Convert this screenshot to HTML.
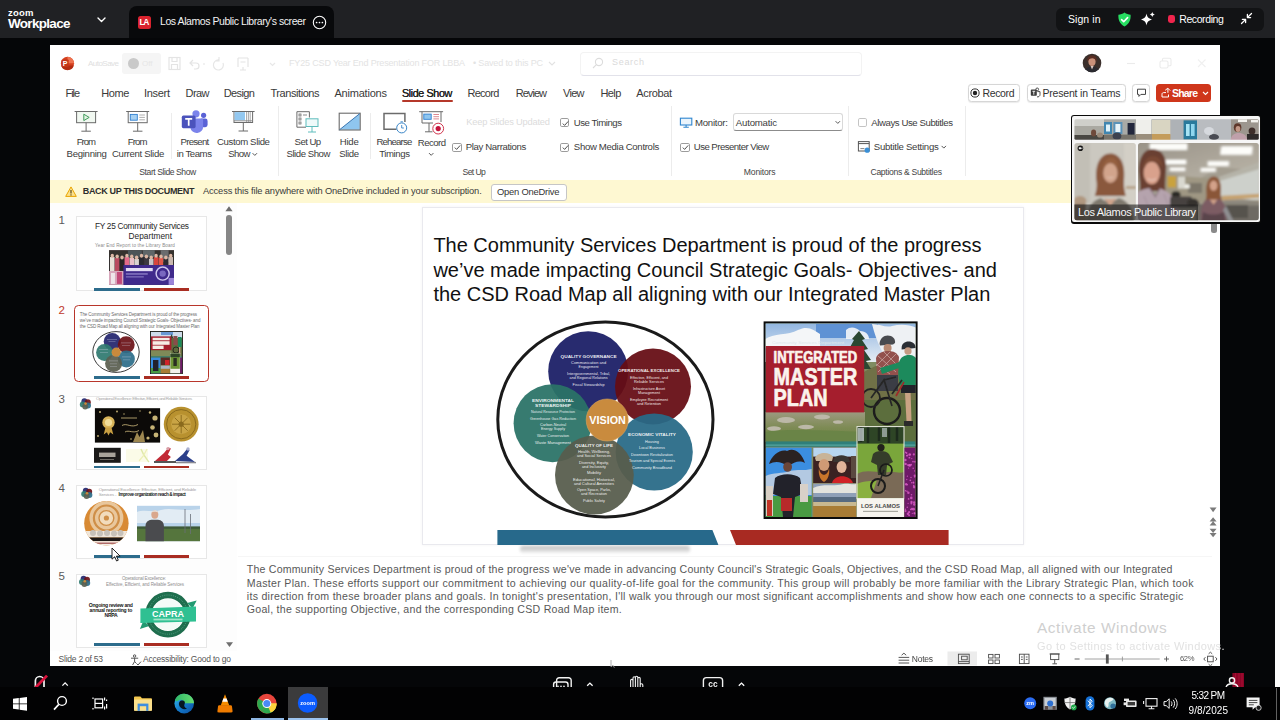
<!DOCTYPE html>
<html>
<head>
<meta charset="utf-8">
<title>Zoom screen share</title>
<style>
*{box-sizing:border-box;margin:0;padding:0}
html,body{width:1280px;height:720px;overflow:hidden;background:#050608;font-family:"Liberation Sans",sans-serif;}
.abs{position:absolute}
#root{position:relative;width:1280px;height:720px;overflow:hidden;background:#050608}
#soft{position:absolute;left:0;top:0;width:1280px;height:720px;filter:blur(0.45px)}
svg text{font-family:"Liberation Sans",sans-serif}
.t{position:absolute;white-space:nowrap}
</style>
</head>
<body>
<div id="root"><div id="soft">
<!-- p_zoom.zoombar -->
<div class="abs" style="left:0px;top:0px;width:1275px;height:38px;background:#202124;"></div>
<span class="t" style="left:8.00px;top:7.75px;font-size:9.5px;line-height:9.5px;color:#fff;letter-spacing:0.232px;font-weight:bold;">zoom</span>
<span class="t" style="left:8.00px;top:17.25px;font-size:13.5px;line-height:13.5px;color:#fff;letter-spacing:-0.691px;font-weight:bold;">Workplace</span>
<svg class="abs" style="left:97px;top:17px;" width="9" height="6" viewBox="0 0 9 6"><path d="M1 1 L4.5 4.5 L8 1" fill="none" stroke="#fff" stroke-width="1.4" stroke-linecap="round" stroke-linejoin="round"/></svg>
<div class="abs" style="left:129px;top:6px;width:204.5px;height:32px;background:#08090b;border-radius:8px 8px 0 0;"></div>
<div class="abs" style="left:138px;top:15.5px;width:13px;height:13px;background:#d9232e;border-radius:2.5px;"></div>
<span class="t" style="left:139.60px;top:17.95px;font-size:8.5px;line-height:8.5px;color:#fff;letter-spacing:-1.531px;font-weight:bold;">LA</span>
<span class="t" style="left:160.00px;top:16.25px;font-size:10.5px;line-height:10.5px;color:#f2f2f2;letter-spacing:-0.429px;">Los Alamos Public Library's screer</span>
<svg class="abs" style="left:312px;top:14.5px;" width="15" height="15" viewBox="0 0 15 15"><circle cx="7.5" cy="7.5" r="6.2" fill="none" stroke="#fff" stroke-width="1.1"/><circle cx="4.6" cy="7.5" r="0.85" fill="#fff"/><circle cx="7.5" cy="7.5" r="0.85" fill="#fff"/><circle cx="10.4" cy="7.5" r="0.85" fill="#fff"/></svg>
<div class="abs" style="left:1056px;top:8px;width:208px;height:22.5px;background:#121315;border-radius:6px;"></div>
<span class="t" style="left:1068.00px;top:14.05px;font-size:10.5px;line-height:10.5px;color:#fff;letter-spacing:0.066px;">Sign in</span>
<svg class="abs" style="left:1116.5px;top:11.5px;" width="15" height="15" viewBox="0 0 15 15"><path d="M7.5 0.6 C9.3 2 11.5 2.6 13.6 2.7 C13.9 7.8 12.3 11.9 7.5 14.4 C2.7 11.9 1.1 7.8 1.4 2.7 C3.5 2.6 5.7 2 7.5 0.6Z" fill="#27de62"/><path d="M4.6 7.6 L6.7 9.7 L10.6 5.6" fill="none" stroke="#ffffff" stroke-width="1.6" stroke-linecap="round" stroke-linejoin="round"/></svg>
<svg class="abs" style="left:1139.5px;top:11px;" width="16" height="16" viewBox="0 0 16 16"><path d="M6.5 2.5 C7.2 6.2 8.3 7.3 12 8.5 C8.3 9.7 7.2 10.8 6.5 14.5 C5.8 10.8 4.7 9.7 1 8.5 C4.7 7.3 5.8 6.2 6.5 2.5Z" fill="#fff"/><path d="M12.3 0.8 C12.6 2.5 13.1 3 14.8 3.5 C13.1 4 12.6 4.5 12.3 6.2 C12 4.5 11.5 4 9.8 3.5 C11.5 3 12 2.5 12.3 0.8Z" fill="#fff"/></svg>
<div class="abs" style="left:1168.2px;top:15.4px;width:7.2px;height:7.2px;background:#f0254d;border-radius:2.4px;"></div>
<span class="t" style="left:1179.20px;top:13.95px;font-size:10.5px;line-height:10.5px;color:#fff;letter-spacing:-0.395px;">Recording</span>
<svg class="abs" style="left:1240px;top:12px;" width="13" height="13" viewBox="0 0 13 13"><g fill="none" stroke="#fff" stroke-width="1.3" stroke-linecap="round" stroke-linejoin="round"><path d="M11.5 1.5 L7.6 5.4 M7.4 2.4 V5.6 H10.6"/><path d="M1.5 11.5 L5.4 7.6 M2.4 7.4 H5.6 V10.6"/></g></svg>
<div class="abs" style="left:1275px;top:0px;width:5px;height:687px;background:#fbfbfb;"></div>
<!-- p_chrome.window -->
<div class="abs" style="left:50px;top:45px;width:1170px;height:621px;background:#ffffff;"></div>
<svg class="abs" style="left:60px;top:56px;" width="15" height="15" viewBox="0 0 15 15"><circle cx="7.5" cy="7.3" r="6.6" fill="#d5401f"/><path d="M7.5 0.7 A6.6 6.6 0 0 1 14.1 7.3 L7.5 7.3Z" fill="#ee7350"/><path d="M1.2 9.5 A6.6 6.6 0 0 0 13.8 9.5Z" fill="#b22c12"/><rect x="1.5" y="3.6" width="7.2" height="7.4" rx="1" fill="#c4351a"/><text x="5.1" y="10" font-family="Liberation Sans" font-weight="bold" font-size="7" fill="#fff" text-anchor="middle">P</text></svg>
<span class="t" style="left:88.00px;top:59.50px;font-size:8px;line-height:8px;color:#e0e0e0;letter-spacing:-0.528px;">AutoSave</span>
<div class="abs" style="left:122px;top:53px;width:39px;height:21px;background:#f5f5f5;border-radius:3px;"></div>
<div class="abs" style="left:127.5px;top:58px;width:11px;height:11px;background:#c9c9c9;border-radius:50%;"></div>
<span class="t" style="left:142.00px;top:59.50px;font-size:8px;line-height:8px;color:#e6e6e6;">Off</span>
<svg class="abs" style="left:167px;top:54px;" width="120" height="20" viewBox="0 0 120 20"><g fill="none" stroke="#e4e4e4" stroke-width="1.2"><rect x="2" y="3.5" width="11" height="12"/><path d="M5 3.5v4h5v-4M4.5 15.5v-5h6v5"/><path d="M26 6 l-3 3 3 3 M23 9 h6 a3 3 0 0 1 0 6 h-2"/><path d="M36 10h2"/><path d="M52 6 a5 5 0 1 0 4 3 M52 3v4h-4" stroke="#e6e6e6"/><path d="M71 4h10M71 4v9M81 4v9M73.5 8h5M76 13v3M73 16h6"/><path d="M103 9l2.5 2.5 2.5 -2.5" stroke="#e8e8e8"/></g></svg>
<span class="t" style="left:289.00px;top:59.00px;font-size:9px;line-height:9px;color:#e3e3e3;letter-spacing:-0.161px;">FY25 CSD Year End Presentation FOR LBBA</span>
<span class="t" style="left:473.00px;top:59.00px;font-size:9px;line-height:9px;color:#e3e3e3;letter-spacing:-0.158px;">• Saved to this PC</span>
<svg class="abs" style="left:548px;top:61px;" width="8" height="6" viewBox="0 0 8 6"><path d="M1 1l3 3 3-3" fill="none" stroke="#e2e2e2" stroke-width="1.1"/></svg>
<div class="abs" style="left:580px;top:51.5px;width:282px;height:24px;background:#fff;border:1px solid #f3f3f3;border-bottom-color:#e2e2ea;border-radius:4px;"></div>
<svg class="abs" style="left:592px;top:57px;" width="12" height="12" viewBox="0 0 12 12"><circle cx="7" cy="5" r="3.6" fill="none" stroke="#dcdcdc" stroke-width="1.1"/><path d="M4.4 7.6L1 11" stroke="#dcdcdc" stroke-width="1.1"/></svg>
<span class="t" style="left:612.00px;top:58.00px;font-size:9px;line-height:9px;color:#dadada;letter-spacing:0.697px;">Search</span>
<svg class="abs" style="left:1082px;top:53px;" width="20" height="20" viewBox="0 0 20 20"><defs><clipPath id="avc"><circle cx="10" cy="10" r="9.3"/></clipPath></defs><g clip-path="url(#avc)"><rect width="20" height="20" fill="#3b302c"/><ellipse cx="10" cy="8.6" rx="3.6" ry="4.4" fill="#c9917a"/><path d="M5.2 9 C4.6 3.5 8 2.2 10 2.4 C12.6 2.2 15.5 4 14.7 9.5 C14 7 13 5.5 10.5 5.2 C8 5.4 6.2 6.5 5.2 9Z" fill="#5a2d22"/><path d="M2 20 C3 14.5 6.5 13.6 10 13.8 C13.5 13.6 17 14.5 18 20Z" fill="#2a2a30"/><path d="M8.6 13 L10 16.5 L11.6 13Z" fill="#d8c7c0"/></g></svg>
<svg class="abs" style="left:1124px;top:55px;" width="90" height="16" viewBox="0 0 90 16"><g fill="none" stroke="#ebebeb" stroke-width="1.1"><path d="M3 8.5h8"/><rect x="36" y="6" width="8" height="7" rx="1.5"/><path d="M38.5 6v-1.8a1 1 0 0 1 1-1h6a1.5 1.5 0 0 1 1.5 1.5v5a1 1 0 0 1-1 1h-2" /><path d="M74 4.5l7.5 7.5M81.5 4.5l-7.5 7.5" stroke="#f0f0f0"/></g></svg>
<span class="t" style="left:65.50px;top:88.10px;font-size:11px;line-height:11px;color:#3a3a3a;letter-spacing:-1.075px;">File</span>
<span class="t" style="left:101.20px;top:88.10px;font-size:11px;line-height:11px;color:#3a3a3a;letter-spacing:-0.348px;">Home</span>
<span class="t" style="left:144.00px;top:88.10px;font-size:11px;line-height:11px;color:#3a3a3a;letter-spacing:-0.302px;">Insert</span>
<span class="t" style="left:185.50px;top:88.10px;font-size:11px;line-height:11px;color:#3a3a3a;letter-spacing:-0.557px;">Draw</span>
<span class="t" style="left:223.70px;top:88.10px;font-size:11px;line-height:11px;color:#3a3a3a;letter-spacing:-0.588px;">Design</span>
<span class="t" style="left:270.50px;top:88.10px;font-size:11px;line-height:11px;color:#3a3a3a;letter-spacing:-0.439px;">Transitions</span>
<span class="t" style="left:334.50px;top:88.10px;font-size:11px;line-height:11px;color:#3a3a3a;letter-spacing:-0.213px;">Animations</span>
<span class="t" style="left:467.50px;top:88.10px;font-size:11px;line-height:11px;color:#3a3a3a;letter-spacing:-0.732px;">Record</span>
<span class="t" style="left:515.70px;top:88.10px;font-size:11px;line-height:11px;color:#3a3a3a;letter-spacing:-0.954px;">Review</span>
<span class="t" style="left:563.00px;top:88.10px;font-size:11px;line-height:11px;color:#3a3a3a;letter-spacing:-0.715px;">View</span>
<span class="t" style="left:600.50px;top:88.10px;font-size:11px;line-height:11px;color:#3a3a3a;letter-spacing:-0.608px;">Help</span>
<span class="t" style="left:636.30px;top:88.10px;font-size:11px;line-height:11px;color:#3a3a3a;letter-spacing:-0.368px;">Acrobat</span>
<span class="t" style="left:401.70px;top:88.10px;font-size:11px;line-height:11px;color:#1f1f1f;letter-spacing:-0.504px;text-shadow:0.35px 0 0 #1f1f1f;">Slide Show</span>
<div class="abs" style="left:401.5px;top:100px;width:51px;height:1.8px;background:#b5382a;border-radius:1px;"></div>
<div class="abs" style="left:967.5px;top:83.8px;width:52.5px;height:18px;background:#fff;border:1px solid #d6d6d6;border-radius:3.5px;box-shadow:0 0.5px 1px rgba(0,0,0,0.08);"></div>
<svg class="abs" style="left:969.5px;top:87.5px;" width="10" height="10" viewBox="0 0 10 10"><circle cx="5" cy="5" r="4.1" fill="none" stroke="#333" stroke-width="1"/><circle cx="5" cy="5" r="2.2" fill="#222"/></svg>
<span class="t" style="left:982.50px;top:87.55px;font-size:10.5px;line-height:10.5px;color:#333;letter-spacing:-0.370px;">Record</span>
<div class="abs" style="left:1026.5px;top:83.8px;width:99px;height:18px;background:#fff;border:1px solid #d6d6d6;border-radius:3.5px;box-shadow:0 0.5px 1px rgba(0,0,0,0.08);"></div>
<svg class="abs" style="left:1029.5px;top:87px;" width="11" height="11" viewBox="0 0 11 11"><rect x="0.8" y="2.6" width="6" height="6.2" rx="0.8" fill="#3d3d3d"/><path d="M2.4 4.3h2.8M3.8 4.3v3.4" stroke="#fff" stroke-width="0.9"/><circle cx="7.2" cy="2.4" r="1.4" fill="none" stroke="#3d3d3d" stroke-width="0.9"/><path d="M7.4 4.6h2.6v3a2.3 2.3 0 0 1-3 2.2" fill="none" stroke="#3d3d3d" stroke-width="0.9"/></svg>
<span class="t" style="left:1042.50px;top:87.55px;font-size:10.5px;line-height:10.5px;color:#333;letter-spacing:-0.195px;">Present in Teams</span>
<div class="abs" style="left:1132px;top:83.8px;width:17.8px;height:18px;background:#fff;border:1px solid #d6d6d6;border-radius:3.5px;box-shadow:0 0.5px 1px rgba(0,0,0,0.08);"></div>
<svg class="abs" style="left:1135.5px;top:88px;" width="11" height="10" viewBox="0 0 11 10"><path d="M1.5 1.2h8v5.2h-4.6l-2 2v-2h-1.4z" fill="none" stroke="#444" stroke-width="1"/></svg>
<div class="abs" style="left:1156.2px;top:84.2px;width:54.6px;height:17.6px;background:#cf361b;border-radius:3.5px;"></div>
<svg class="abs" style="left:1159.5px;top:87px;" width="11" height="11" viewBox="0 0 11 11"><path d="M2 10V7.2C2 6.2 2.7 5.6 3.6 5.6H6" fill="none" stroke="#fff" stroke-width="1"/><path d="M5.2 3.3L7.8 1.2l2.4 2.4M7.9 1.5v4.3" fill="none" stroke="#fff" stroke-width="1" stroke-linejoin="round"/><path d="M2 10h6.5V7.5" fill="none" stroke="#fff" stroke-width="1"/></svg>
<span class="t" style="left:1172.00px;top:87.75px;font-size:10.5px;line-height:10.5px;color:#fff;letter-spacing:-0.796px;font-weight:bold;">Share</span>
<svg class="abs" style="left:1201.5px;top:91px;" width="7" height="5" viewBox="0 0 7 5"><path d="M1 1l2.5 2.5L6 1" fill="none" stroke="#fff" stroke-width="1.1"/></svg>
<!-- p_ribbon.ribbon -->
<div class="abs" style="left:170.7px;top:112.5px;width:1px;height:46.5px;background:#ececec;"></div>
<div class="abs" style="left:278px;top:106px;width:1px;height:70px;background:#ececec;"></div>
<div class="abs" style="left:370px;top:112.5px;width:1px;height:46.5px;background:#ececec;"></div>
<div class="abs" style="left:671.2px;top:106px;width:1px;height:70px;background:#ececec;"></div>
<div class="abs" style="left:848.2px;top:106px;width:1px;height:70px;background:#ececec;"></div>
<div class="abs" style="left:965.2px;top:106px;width:1px;height:70px;background:#ececec;"></div>
<span class="t" style="left:76.70px;top:136.90px;font-size:9.6px;line-height:9.6px;color:#3c3c3c;letter-spacing:-0.999px;">From</span>
<span class="t" style="left:66.60px;top:148.90px;font-size:9.6px;line-height:9.6px;color:#3c3c3c;letter-spacing:-0.301px;">Beginning</span>
<span class="t" style="left:127.70px;top:136.90px;font-size:9.6px;line-height:9.6px;color:#3c3c3c;letter-spacing:-0.833px;">From</span>
<span class="t" style="left:112.00px;top:148.90px;font-size:9.6px;line-height:9.6px;color:#3c3c3c;letter-spacing:-0.311px;">Current Slide</span>
<span class="t" style="left:180.50px;top:136.90px;font-size:9.6px;line-height:9.6px;color:#3c3c3c;letter-spacing:-0.714px;">Present</span>
<span class="t" style="left:176.80px;top:148.90px;font-size:9.6px;line-height:9.6px;color:#3c3c3c;letter-spacing:-0.435px;">in Teams</span>
<span class="t" style="left:217.00px;top:136.90px;font-size:9.6px;line-height:9.6px;color:#3c3c3c;letter-spacing:-0.372px;">Custom Slide</span>
<span class="t" style="left:228.20px;top:148.90px;font-size:9.6px;line-height:9.6px;color:#3c3c3c;letter-spacing:-0.572px;">Show</span>
<span class="t" style="left:294.60px;top:137.10px;font-size:9.6px;line-height:9.6px;color:#3c3c3c;letter-spacing:-0.550px;">Set Up</span>
<span class="t" style="left:286.50px;top:148.80px;font-size:9.6px;line-height:9.6px;color:#3c3c3c;letter-spacing:-0.459px;">Slide Show</span>
<span class="t" style="left:339.70px;top:137.10px;font-size:9.6px;line-height:9.6px;color:#3c3c3c;letter-spacing:-0.215px;">Hide</span>
<span class="t" style="left:339.30px;top:148.80px;font-size:9.6px;line-height:9.6px;color:#3c3c3c;letter-spacing:-0.387px;">Slide</span>
<span class="t" style="left:376.50px;top:137.10px;font-size:9.6px;line-height:9.6px;color:#3c3c3c;letter-spacing:-0.832px;">Rehearse</span>
<span class="t" style="left:379.20px;top:148.80px;font-size:9.6px;line-height:9.6px;color:#3c3c3c;letter-spacing:-0.408px;">Timings</span>
<span class="t" style="left:417.80px;top:137.60px;font-size:9.6px;line-height:9.6px;color:#3c3c3c;letter-spacing:-0.530px;">Record</span>
<span class="t" style="left:139.30px;top:168.30px;font-size:8.6px;line-height:8.6px;color:#444;letter-spacing:-0.439px;">Start Slide Show</span>
<span class="t" style="left:462.50px;top:168.30px;font-size:8.6px;line-height:8.6px;color:#444;letter-spacing:-0.598px;">Set Up</span>
<span class="t" style="left:743.80px;top:168.30px;font-size:8.6px;line-height:8.6px;color:#444;letter-spacing:-0.168px;">Monitors</span>
<span class="t" style="left:870.50px;top:168.30px;font-size:8.6px;line-height:8.6px;color:#444;letter-spacing:-0.313px;">Captions &amp; Subtitles</span>
<span class="t" style="left:466.30px;top:117.85px;font-size:9.3px;line-height:9.3px;color:#dcdcdc;letter-spacing:-0.204px;">Keep Slides Updated</span>
<div class="abs" style="left:452.4px;top:142.6px;width:9.2px;height:9.2px;background:#fff;border:1px solid #9c9c9c;border-radius:1.8px;"><svg width="9" height="9" viewBox="0 0 9 9" style="position:absolute;left:-0.5px;top:-0.5px"><path d="M1.8 4.6L3.6 6.4L7.2 2.4" fill="none" stroke="#444" stroke-width="0.95"/></svg></div>
<span class="t" style="left:465.80px;top:142.30px;font-size:9.6px;line-height:9.6px;color:#3c3c3c;letter-spacing:-0.366px;">Play Narrations</span>
<div class="abs" style="left:560px;top:118.10000000000001px;width:9.2px;height:9.2px;background:#fff;border:1px solid #9c9c9c;border-radius:1.8px;"><svg width="9" height="9" viewBox="0 0 9 9" style="position:absolute;left:-0.5px;top:-0.5px"><path d="M1.8 4.6L3.6 6.4L7.2 2.4" fill="none" stroke="#444" stroke-width="0.95"/></svg></div>
<span class="t" style="left:573.80px;top:117.80px;font-size:9.6px;line-height:9.6px;color:#3c3c3c;letter-spacing:-0.462px;">Use Timings</span>
<div class="abs" style="left:560px;top:142.6px;width:9.2px;height:9.2px;background:#fff;border:1px solid #9c9c9c;border-radius:1.8px;"><svg width="9" height="9" viewBox="0 0 9 9" style="position:absolute;left:-0.5px;top:-0.5px"><path d="M1.8 4.6L3.6 6.4L7.2 2.4" fill="none" stroke="#444" stroke-width="0.95"/></svg></div>
<span class="t" style="left:573.80px;top:142.30px;font-size:9.6px;line-height:9.6px;color:#3c3c3c;letter-spacing:-0.319px;">Show Media Controls</span>
<span class="t" style="left:695.00px;top:117.80px;font-size:9.6px;line-height:9.6px;color:#3c3c3c;letter-spacing:-0.240px;">Monitor:</span>
<div class="abs" style="left:733.2px;top:113.2px;width:109.4px;height:18.2px;background:#fff;border:1px solid #d9d9d9;border-bottom-color:#8c8c8c;border-radius:3px;"></div>
<span class="t" style="left:735.80px;top:117.70px;font-size:9.6px;line-height:9.6px;color:#3c3c3c;letter-spacing:-0.186px;">Automatic</span>
<div class="abs" style="left:680.4px;top:142.6px;width:9.2px;height:9.2px;background:#fff;border:1px solid #9c9c9c;border-radius:1.8px;"><svg width="9" height="9" viewBox="0 0 9 9" style="position:absolute;left:-0.5px;top:-0.5px"><path d="M1.8 4.6L3.6 6.4L7.2 2.4" fill="none" stroke="#444" stroke-width="0.95"/></svg></div>
<span class="t" style="left:693.80px;top:142.30px;font-size:9.6px;line-height:9.6px;color:#3c3c3c;letter-spacing:-0.539px;">Use Presenter View</span>
<div class="abs" style="left:857.6px;top:118.10000000000001px;width:9.2px;height:9.2px;background:#fff;border:1px solid #c4c4c4;border-radius:1.8px;"></div>
<span class="t" style="left:871.30px;top:117.80px;font-size:9.6px;line-height:9.6px;color:#3c3c3c;letter-spacing:-0.418px;">Always Use Subtitles</span>
<span class="t" style="left:873.80px;top:142.30px;font-size:9.6px;line-height:9.6px;color:#3c3c3c;letter-spacing:-0.274px;">Subtitle Settings</span>
<svg class="abs" style="left:0px;top:0px;" width="1280" height="200" viewBox="0 0 1280 200"><g fill="none" stroke="#6b6b6b" stroke-width="1"><path d="M74.6 111.5H97.6"/><rect x="76.6" y="111.5" width="19" height="11.2" fill="#f1f8f1"/><path d="M86.1 122.7V131.2M81.35 131.2H90.85"/></g><path d="M83.8 114.2V120.6L89.2 117.4Z" fill="#e3f3e3" stroke="#3f9b5a" stroke-width="1" stroke-linejoin="round"/><g fill="none" stroke="#6b6b6b" stroke-width="1"><path d="M126.19999999999999 111.5H149.2"/><rect x="128.2" y="111.5" width="19" height="11.2" fill="#fff"/><path d="M137.7 122.7V131.2M132.95 131.2H142.45"/></g><rect x="130.3" y="114.4" width="7" height="5.8" fill="#a6d0f2" stroke="#2f7fd0" stroke-width="0.9"/><path d="M139.3 115h5.6M139.3 117.4h5.6M139.3 119.8h5.6" stroke="#9a9a9a" stroke-width="0.8"/><g><circle cx="203.6" cy="115.3" r="2.6" fill="#5a62d6"/><rect x="199.4" y="118.6" width="8.2" height="8.6" rx="2.4" fill="#5a62d6"/><circle cx="196" cy="113.8" r="3.6" fill="#7b83eb"/><path d="M189.5 118.6h12.4a1.2 1.2 0 0 1 1.2 1.2v6.2a6.4 6.4 0 0 1-12.8 1.2z" fill="#7b83eb"/><rect x="181.8" y="115.6" width="13.8" height="12.6" rx="1.6" fill="#4b53bc"/><path d="M185.2 118.8h7M188.7 118.8v7" stroke="#fff" stroke-width="1.7"/></g><g fill="none" stroke="#6b6b6b" stroke-width="1"><path d="M232.0 111.5H254.6"/><rect x="234.0" y="111.5" width="18.6" height="11" fill="#fff"/><path d="M243.3 122.5V131.0M238.55 131.0H248.05"/></g><rect x="234.6" y="112.1" width="10.4" height="8.2" fill="#93c8f0"/><path d="M246.6 112v10M248.4 112v10M250.2 112v10" stroke="#a8a8a8" stroke-width="1"/><path d="M234 120.8H252.6" stroke="#8a8a8a" stroke-width="0.9"/><g fill="none" stroke="#6b6b6b" stroke-width="1"><path d="M306 127.2H296.9V111.7H309.4V117.5"/><rect x="299" y="114" width="2" height="2" stroke-width="0.8"/><rect x="299" y="118" width="2" height="2" stroke-width="0.8"/><rect x="299" y="122" width="2" height="2" stroke-width="0.8"/><path d="M303 115h4" stroke-width="0.8"/></g><g fill="none" stroke="#5fbdbd" stroke-width="1"><rect x="306" y="118.8" width="12" height="7.7" fill="#eefafa"/><path d="M312 126.5V132M308 132h8"/></g><path d="M339.6 129.7L359.8 113.6V129.7Z" fill="#8fc6ef"/><rect x="339.2" y="113.2" width="21" height="16.8" fill="none" stroke="#6b6b6b" stroke-width="1.1"/><path d="M339.6 129.7L359.8 113.6" stroke="#3b76b0" stroke-width="1"/><path d="M396.5 129.3H384V113.6H404.9V122" fill="none" stroke="#6b6b6b" stroke-width="1.5"/><circle cx="401.7" cy="127.9" r="5" fill="#fff" stroke="#3a86c8" stroke-width="1"/><path d="M401.7 125v3h2.2M400.5 121.8h2.4" fill="none" stroke="#3a86c8" stroke-width="0.9"/><g fill="none" stroke="#6b6b6b" stroke-width="1"><path d="M419.2 111.7H443.1"/><path d="M433 123H422V111.7M441 111.7V122"/><path d="M429 123V131.8M425 131.8H432.5"/></g><rect x="423.8" y="114.1" width="7.4" height="5.2" fill="#8fc6ef" stroke="#2f7fd0" stroke-width="0.9"/><path d="M433.4 114.5h5.6M433.4 116.7h5.6M433.4 118.9h5.6" stroke="#d26a76" stroke-width="0.8"/><circle cx="438.2" cy="128.6" r="5.4" fill="#fff" stroke="#d0344c" stroke-width="1"/><circle cx="438.2" cy="128.6" r="2.6" fill="#c4143c"/><path d="M252.60000000000002 153.20000000000002L254.8 155.4L257.0 153.20000000000002" fill="none" stroke="#444" stroke-width="0.9"/><path d="M429.0 153.1L431.2 155.29999999999998L433.4 153.1" fill="none" stroke="#444" stroke-width="0.9"/><path d="M941.5999999999999 145.9L943.8 148.1L946.0 145.9" fill="none" stroke="#444" stroke-width="0.9"/><path d="M835.5999999999999 121.2L837.8 123.39999999999999L840.0 121.2" fill="none" stroke="#444" stroke-width="0.9"/><g fill="none" stroke="#2f86cf" stroke-width="1.1"><rect x="680.4" y="118.2" width="11.4" height="6.8" fill="#eaf4fc"/><path d="M686.1 125V127M683.4 127.2H688.8"/></g><g><rect x="858.4" y="141.6" width="10.8" height="9.4" fill="#fff" stroke="#555" stroke-width="1"/><path d="M858.4 143.6H869.2" stroke="#555" stroke-width="1"/><path d="M860.4 148.6h4" stroke="#777" stroke-width="0.9"/><circle cx="867.2" cy="150.2" r="2.6" fill="#3a8fd6"/></g></svg>
<div class="abs" style="left:50px;top:179.8px;width:1170px;height:22.8px;background:#fef8d2;"></div>
<svg class="abs" style="left:65px;top:185.6px;" width="12" height="11.5" viewBox="0 0 12 11.5"><path d="M6 0.9L11.3 10.4H0.7Z" fill="#fbe08a" stroke="#e9a400" stroke-width="1" stroke-linejoin="round"/><path d="M6 4v3.4" stroke="#4a3a10" stroke-width="1.1"/><circle cx="6" cy="8.9" r="0.65" fill="#4a3a10"/></svg>
<span class="t" style="left:82.80px;top:187.10px;font-size:9px;line-height:9px;color:#2e2e2e;letter-spacing:-0.337px;font-weight:bold;">BACK UP THIS DOCUMENT</span>
<span class="t" style="left:203.00px;top:186.95px;font-size:9.3px;line-height:9.3px;color:#3a3a3a;letter-spacing:-0.132px;">Access this file anywhere with OneDrive included in your subscription.</span>
<div class="abs" style="left:490.5px;top:183.8px;width:76.5px;height:16.8px;background:#fff;border:1px solid #c6c6c6;border-radius:3px;"></div>
<span class="t" style="left:497.00px;top:187.30px;font-size:9.4px;line-height:9.4px;color:#333;letter-spacing:-0.226px;">Open OneDrive</span>
<!-- p_thumbs.thumbs -->
<div class="abs" style="left:50px;top:202.6px;width:187.4px;height:448px;background:#fdfdfd;"></div>
<span class="t" style="left:58.60px;top:215.45px;font-size:11.5px;line-height:11.5px;color:#5a5a5a;">1</span>
<span class="t" style="left:58.60px;top:304.55px;font-size:11.5px;line-height:11.5px;color:#c0392b;">2</span>
<span class="t" style="left:58.60px;top:393.85px;font-size:11.5px;line-height:11.5px;color:#5a5a5a;">3</span>
<span class="t" style="left:58.60px;top:482.85px;font-size:11.5px;line-height:11.5px;color:#5a5a5a;">4</span>
<span class="t" style="left:58.60px;top:571.45px;font-size:11.5px;line-height:11.5px;color:#5a5a5a;">5</span>
<div class="abs" style="left:76.4px;top:216.4px;width:130.8px;height:74.8px;background:#fff;border:1px solid #e7e7e7;"></div>
<span class="t" style="left:94.90px;top:221.85px;font-size:8.3px;line-height:8.3px;color:#262626;letter-spacing:-0.274px;">FY 25 Community Services</span>
<span class="t" style="left:128.60px;top:231.85px;font-size:8.3px;line-height:8.3px;color:#262626;">Department</span>
<span class="t" style="left:95.00px;top:243.70px;font-size:4.6px;line-height:4.6px;color:#8a8a8a;letter-spacing:0.128px;">Year End Report to the Library Board</span>
<svg class="abs" style="left:108.6px;top:249.6px;" width="65.6" height="35" viewBox="0 0 66 35"><defs><filter id="tb1"><feGaussianBlur stdDeviation="0.45"/></filter></defs><g filter="url(#tb1)"><rect width="66" height="35" fill="#34302f"/><rect x="19" y="0" width="14" height="8" fill="#4c5458"/><rect x="34" y="0" width="12" height="7" fill="#5e6668"/><rect x="52" y="0" width="8" height="12" fill="#6a6c6e"/><rect x="1.0" y="7.0" width="4.6" height="22" fill="#e8e0d8"/><ellipse cx="3.3" cy="5.6" rx="1.7" ry="2" fill="#dcb8a4"/><rect x="5.9" y="7.9" width="4.6" height="22" fill="#b84a5e"/><ellipse cx="8.2" cy="6.5" rx="1.7" ry="2" fill="#dcb8a4"/><rect x="10.8" y="8.8" width="4.6" height="22" fill="#2a2628"/><ellipse cx="13.1" cy="7.4" rx="1.7" ry="2" fill="#dcb8a4"/><rect x="15.7" y="7.0" width="4.6" height="22" fill="#e36a8a"/><ellipse cx="18.0" cy="5.6" rx="1.7" ry="2" fill="#dcb8a4"/><rect x="20.6" y="7.9" width="4.6" height="22" fill="#e9c0c8"/><ellipse cx="22.9" cy="6.5" rx="1.7" ry="2" fill="#dcb8a4"/><rect x="25.5" y="8.8" width="4.6" height="22" fill="#d9d4d0"/><ellipse cx="27.8" cy="7.4" rx="1.7" ry="2" fill="#dcb8a4"/><rect x="30.4" y="7.0" width="4.6" height="22" fill="#2c2a30"/><ellipse cx="32.7" cy="5.6" rx="1.7" ry="2" fill="#dcb8a4"/><rect x="35.3" y="7.9" width="4.6" height="22" fill="#3a3840"/><ellipse cx="37.6" cy="6.5" rx="1.7" ry="2" fill="#dcb8a4"/><rect x="40.2" y="8.8" width="4.6" height="22" fill="#c8c4c8"/><ellipse cx="42.5" cy="7.4" rx="1.7" ry="2" fill="#dcb8a4"/><rect x="45.1" y="7.0" width="4.6" height="22" fill="#d8453c"/><ellipse cx="47.4" cy="5.6" rx="1.7" ry="2" fill="#dcb8a4"/><rect x="50.0" y="7.9" width="4.6" height="22" fill="#e0564a"/><ellipse cx="52.3" cy="6.5" rx="1.7" ry="2" fill="#dcb8a4"/><rect x="54.9" y="8.8" width="4.6" height="22" fill="#2e2c30"/><ellipse cx="57.2" cy="7.4" rx="1.7" ry="2" fill="#dcb8a4"/><rect x="59.8" y="7.0" width="4.6" height="22" fill="#c9b8b0"/><ellipse cx="62.1" cy="5.6" rx="1.7" ry="2" fill="#dcb8a4"/><rect x="0" y="21" width="15" height="14" fill="#d8a8bc"/><rect x="2" y="23" width="4" height="11" fill="#efe6ea"/><rect x="8" y="22" width="5" height="12" fill="#c24a78"/><rect x="14.5" y="15" width="51.5" height="20" fill="#3f2a8c"/><rect x="17" y="18" width="27" height="3.2" fill="#e4def4"/><rect x="17" y="23.4" width="22" height="1.2" fill="#9a8cd0"/><rect x="17" y="26.4" width="18" height="1.1" fill="#8a7cc4"/><circle cx="54" cy="23.6" r="6.6" fill="none" stroke="#cfc6ee" stroke-width="1.5"/><circle cx="54" cy="23.6" r="3.2" fill="#7a68c0"/><rect x="60" y="28" width="6" height="7" fill="#9a84d8"/></g></svg>
<div class="abs" style="left:93.5px;top:287.7px;width:46.2px;height:2.9px;background:#2d6c8c;"></div><div class="abs" style="left:143.7px;top:287.7px;width:45.6px;height:2.9px;background:#a92d22;"></div>
<div class="abs" style="left:74.4px;top:305px;width:134.6px;height:77px;background:#fff;border:1.8px solid #b8352a;border-radius:4.5px;"></div>
<span class="t" style="left:79.80px;top:313.15px;font-size:4.5px;line-height:4.5px;color:#6a6a6a;letter-spacing:-0.111px;">The Community Services Department is proud of the progress</span>
<span class="t" style="left:79.80px;top:318.95px;font-size:4.5px;line-height:4.5px;color:#6a6a6a;letter-spacing:-0.103px;">we’ve made impacting Council Strategic Goals- Objectives- and</span>
<span class="t" style="left:79.80px;top:324.55px;font-size:4.5px;line-height:4.5px;color:#6a6a6a;letter-spacing:-0.095px;">the CSD Road Map all aligning with our Integrated Master Plan</span>
<svg class="abs" style="left:92px;top:331.2px;" width="48" height="42" viewBox="0 0 48 42"><ellipse cx="24" cy="21" rx="23.2" ry="20.4" fill="#fff" stroke="#222" stroke-width="0.9"/><circle cx="20.2" cy="10.6" r="8.5" fill="#23266e" fill-opacity="0.93"/><circle cx="34.2" cy="13.8" r="8.5" fill="#6c1218" fill-opacity="0.93"/><circle cx="12.6" cy="21.6" r="8.5" fill="#2f7a70" fill-opacity="0.93"/><circle cx="34.4" cy="28" r="8.5" fill="#2d6e8a" fill-opacity="0.93"/><circle cx="21.6" cy="32.6" r="8.5" fill="#5a5f50" fill-opacity="0.93"/><circle cx="24.2" cy="21.2" r="4.6" fill="#c98a3c"/><g fill="#cfd3e6" opacity="0.4"><rect x="15" y="8" width="10" height="0.8"/><rect x="16.5" y="10.2" width="7" height="0.7"/><rect x="29" y="11.5" width="10" height="0.8"/><rect x="30" y="14" width="8" height="0.7"/><rect x="7" y="18" width="9" height="0.8"/><rect x="8" y="21" width="8" height="0.7"/><rect x="30" y="25.5" width="9" height="0.8"/><rect x="31" y="28.5" width="7" height="0.7"/><rect x="17" y="29.5" width="9" height="0.8"/><rect x="18" y="32.5" width="7" height="0.7"/><rect x="18" y="35" width="7" height="0.7"/></g></svg>
<svg class="abs" style="left:149.6px;top:331.2px;" width="33" height="43.2" viewBox="0 0 33 43.2"><rect x="0.4" y="0.4" width="32.2" height="42.4" fill="#66763f" stroke="#111" stroke-width="0.8"/><rect x="1" y="1" width="31" height="6" fill="#cfdcea"/><rect x="11" y="1" width="12" height="3" fill="#6a98d4"/><path d="M19 9l2.600-6 2.600 6z" fill="#2c4630"/><rect x="21.4" y="7" width="10.600" height="19" fill="#5e6a3c"/><rect x="23.400" y="5" width="4" height="9" fill="#8a4c4a"/><rect x="28" y="6" width="3.600" height="10" fill="#1d8a5c"/><circle cx="26" cy="19" r="3" fill="none" stroke="#1a1a1a" stroke-width="0.800"/><rect x="29" y="16" width="1.400" height="7" fill="#c9a284"/><rect x="1" y="5.400" width="20.400" height="14" fill="#a51e2d"/><g fill="#f6ece6"><rect x="2.600" y="6.800" width="17" height="2.500"/><rect x="2.600" y="10.200" width="17" height="3.600"/><rect x="2.600" y="14.600" width="11" height="3.400"/></g><rect x="1" y="19.400" width="20.400" height="6" fill="#7f8a58"/><rect x="1" y="25.400" width="31" height="1.200" fill="#2f7f7a"/><rect x="1" y="26.600" width="9.400" height="15.600" fill="#3a8ee0"/><rect x="1" y="37" width="9.400" height="5.200" fill="#4a9a42"/><rect x="3" y="29" width="5.400" height="11" fill="#22222c"/><rect x="10.800" y="26.600" width="9" height="7.600" fill="#5a2a24"/><rect x="15" y="29" width="4.400" height="5" fill="#d02228"/><rect x="10.800" y="34.600" width="9" height="7.600" fill="#a87c34"/><rect x="10.800" y="34.600" width="9" height="3.200" fill="#a8b4c4"/><rect x="20.200" y="22.400" width="9.800" height="15.600" fill="#6e9636" stroke="#e8e8e0" stroke-width="0.400"/><rect x="20.400" y="22.600" width="9.400" height="3.600" fill="#2e4428"/><rect x="23.400" y="27" width="3.400" height="8" fill="#2a2e22"/><rect x="20.200" y="38" width="9.800" height="4.200" fill="#f3f1ea"/><rect x="30.200" y="26.600" width="2" height="15.600" fill="#6e1a68"/></svg>
<div class="abs" style="left:93.5px;top:376.4px;width:46.2px;height:2.9px;background:#2d6c8c;"></div><div class="abs" style="left:143.7px;top:376.4px;width:45.6px;height:2.9px;background:#a92d22;"></div>
<div class="abs" style="left:76.4px;top:395.6px;width:130.8px;height:74px;background:#fff;border:1px solid #e7e7e7;"></div>
<svg class="abs" style="left:0px;top:390px;" width="260" height="90" viewBox="0 390 260 90"><circle cx="84.38" cy="401.16" r="2.95" fill="#23266e" fill-opacity="0.92"/><circle cx="87.84" cy="402.17" r="2.95" fill="#6c1218" fill-opacity="0.92"/><circle cx="82.75" cy="404.41" r="2.95" fill="#2f7a70" fill-opacity="0.92"/><circle cx="88.04" cy="405.43" r="2.95" fill="#2d6e8a" fill-opacity="0.92"/><circle cx="85.19" cy="406.45" r="2.95" fill="#5a5f50" fill-opacity="0.92"/><circle cx="85.60" cy="403.60" r="1.32" fill="#c98a3c"/><rect x="94.9" y="408.2" width="65.2" height="34.4" fill="#0c0a08"/><circle cx="108.5" cy="422.5" r="6.2" fill="#d8b45a"/><circle cx="108.5" cy="422.5" r="3.6" fill="#f1dd9a"/><path d="M105.5 427.5l-1.8 7 3.2-2.2 1.6 3.2 1.6-3.2 3.2 2.2-1.8-7z" fill="#c9a043"/><circle cx="100" cy="412" r="1" fill="#e9d28a" opacity="0.85"/><circle cx="117" cy="411.5" r="0.9" fill="#e9d28a" opacity="0.85"/><circle cx="124" cy="414" r="0.7" fill="#e9d28a" opacity="0.85"/><circle cx="150" cy="412.5" r="1.2" fill="#e9d28a" opacity="0.85"/><circle cx="155" cy="418" r="2.6" fill="#e9d28a" opacity="0.85"/><circle cx="152.5" cy="427.5" r="2.3" fill="#e9d28a" opacity="0.85"/><circle cx="156" cy="435" r="2.4" fill="#e9d28a" opacity="0.85"/><circle cx="148" cy="438" r="1.6" fill="#e9d28a" opacity="0.85"/><circle cx="98" cy="436" r="0.9" fill="#e9d28a" opacity="0.85"/><circle cx="131" cy="439" r="0.8" fill="#e9d28a" opacity="0.85"/><circle cx="140" cy="411" r="0.7" fill="#e9d28a" opacity="0.85"/><g stroke="#e7cf8c" stroke-width="0.8" fill="none" opacity="0.9"><path d="M121 418h16M122 425.5c5-3 9 3 16-1M125 432c4-2.5 8 2 14-1.5"/></g><path d="M133 442l4-10 2.5 5 3.5-7 2 12z" fill="#cdb268" opacity="0.75"/><circle cx="181.2" cy="424.2" r="17.4" fill="#b8912f"/><circle cx="181.2" cy="424.2" r="14.6" fill="none" stroke="#8a6a1c" stroke-width="1"/><circle cx="181.2" cy="424.2" r="10" fill="#c9a445"/><path d="M181.2 415v18.4M172 424.2h18.4M174.7 417.7l13 13M187.7 417.7l-13 13" stroke="#8a6a1c" stroke-width="0.9"/><circle cx="181.2" cy="424.2" r="2.6" fill="#8a6a1c"/><rect x="94" y="447.8" width="26.8" height="15" fill="#1b1a19"/><rect x="99" y="452.6" width="16.5" height="4.4" fill="#a8a39a"/><rect x="100" y="459" width="14" height="1" fill="#6d6a64"/><path d="M126 449l22 0 0 13-22 0z" fill="#fbfbe8"/><path d="M141 449c2 6 4 8 8 13" stroke="#dfe9a8" stroke-width="1.4" fill="none"/><path d="M147 449c-2 5-4 8-8 12" stroke="#eef0b8" stroke-width="1.2" fill="none"/><path d="M155 461l9-8 4.5-5.4 2.4 1-3 6 3 2.4-4 4z" fill="#c22a36"/><path d="M154 462h22" stroke="#2a2a2a" stroke-width="1.6"/><path d="M175 461l8-7 4-5 2.6 1-3 5.8 8.4 6.2z" fill="#2b3f8a"/><path d="M176 462.6h20" stroke="#8a8a92" stroke-width="1.4"/><circle cx="168" cy="448.6" r="1.7" fill="#d8a0a8"/><circle cx="188" cy="449" r="1.7" fill="#aab0d0"/></svg>
<span class="t" style="left:96.00px;top:397.40px;font-size:4.4px;line-height:4.4px;color:#a9a9a9;letter-spacing:-0.470px;">Operational Excellence: Effective, Efficient, and Reliable Services</span>
<div class="abs" style="left:93.5px;top:465.5px;width:46.2px;height:2.9px;background:#2d6c8c;"></div><div class="abs" style="left:143.7px;top:465.5px;width:45.6px;height:2.9px;background:#a92d22;"></div>
<div class="abs" style="left:76.4px;top:485.3px;width:130.8px;height:74px;background:#fff;border:1px solid #e7e7e7;"></div>
<svg class="abs" style="left:0px;top:480px;" width="260" height="90" viewBox="0 480 260 90"><circle cx="85.78" cy="490.76" r="2.95" fill="#23266e" fill-opacity="0.92"/><circle cx="89.24" cy="491.77" r="2.95" fill="#6c1218" fill-opacity="0.92"/><circle cx="84.15" cy="494.01" r="2.95" fill="#2f7a70" fill-opacity="0.92"/><circle cx="89.44" cy="495.03" r="2.95" fill="#2d6e8a" fill-opacity="0.92"/><circle cx="86.59" cy="496.05" r="2.95" fill="#5a5f50" fill-opacity="0.92"/><circle cx="87.00" cy="493.20" r="1.32" fill="#c98a3c"/><defs><clipPath id="oc"><circle cx="106.4" cy="523.2" r="22.2"/></clipPath></defs><g clip-path="url(#oc)"><rect x="84" y="500" width="46" height="47" fill="#d88a34"/><circle cx="106.4" cy="518" r="17" fill="#e9c79c"/><circle cx="106.4" cy="518" r="12.5" fill="none" stroke="#cf8f48" stroke-width="2.2"/><circle cx="106.4" cy="518" r="7.4" fill="#f2dcbc" stroke="#cf8f48" stroke-width="1.4"/><circle cx="106.4" cy="518" r="2.6" fill="#cf8f48"/><rect x="84" y="531" width="46" height="6.5" fill="#efe6da"/><g fill="#c7c2ba"><circle cx="93" cy="533" r="3"/><circle cx="100" cy="533.6" r="3"/><circle cx="107" cy="533" r="3"/><circle cx="114" cy="533.6" r="3"/><circle cx="120.5" cy="533" r="3"/></g><rect x="84" y="537.5" width="46" height="3.6" fill="#1e1a18"/><rect x="84" y="541.1" width="46" height="6" fill="#f3ede6"/><rect x="95" y="542.6" width="23" height="1.2" fill="#a04a4a"/></g><rect x="137" y="505.8" width="63" height="35.4" fill="#b9d3ea"/><path d="M137 512c8-3 16 1 24-2 10-3 20 2 39-1v14h-63z" fill="#e9f0f6" opacity="0.85"/><rect x="137" y="527.6" width="63" height="13.6" fill="#55753d"/><rect x="137" y="526.4" width="63" height="2.4" fill="#3f5a38"/><path d="M185 509v24M190.5 514v20" stroke="#6a7078" stroke-width="0.8"/><path d="M145.5 541.2v-15c0-4 2.6-6 6-6.4h6.4c3.6.4 6 2.4 6 6.4v15z" fill="#4a4b4e"/><ellipse cx="154.8" cy="514.6" rx="3.5" ry="4.2" fill="#d9a78c"/><path d="M151.6 512.4c.4-2.6 5.8-2.8 6.4 0-.9-.9-5.4-.9-6.4 0z" fill="#e5e1dc"/></svg>
<span class="t" style="left:98.80px;top:488.40px;font-size:4.4px;line-height:4.4px;color:#a0a0a0;letter-spacing:-0.207px;">Operational Excellence: Effective, Efficient, and Reliable</span>
<span class="t" style="left:98.80px;top:493.20px;font-size:4.4px;line-height:4.4px;color:#a0a0a0;letter-spacing:-0.208px;">Services - </span>
<span class="t" style="left:118.60px;top:493.10px;font-size:4.6px;line-height:4.6px;color:#1c1c1c;letter-spacing:-0.393px;font-weight:bold;">Improve organization reach &amp; impact</span>
<div class="abs" style="left:93.5px;top:554.7px;width:46.2px;height:2.9px;background:#2d6c8c;"></div><div class="abs" style="left:143.7px;top:554.7px;width:45.6px;height:2.9px;background:#a92d22;"></div>
<div class="abs" style="left:76.4px;top:574px;width:130.8px;height:73.6px;background:#fff;border:1px solid #e7e7e7;"></div>
<svg class="abs" style="left:0px;top:570px;" width="260" height="90" viewBox="0 570 260 90"><circle cx="83.58" cy="578.76" r="2.95" fill="#23266e" fill-opacity="0.92"/><circle cx="87.04" cy="579.77" r="2.95" fill="#6c1218" fill-opacity="0.92"/><circle cx="81.95" cy="582.01" r="2.95" fill="#2f7a70" fill-opacity="0.92"/><circle cx="87.24" cy="583.03" r="2.95" fill="#2d6e8a" fill-opacity="0.92"/><circle cx="84.39" cy="584.05" r="2.95" fill="#5a5f50" fill-opacity="0.92"/><circle cx="84.80" cy="581.20" r="1.32" fill="#c98a3c"/><path d="M143.5 620.5l-3.6 8.6 9.4-3z" fill="#239a72"/><path d="M192.5 608.5l4.2-8-9.6 2.6z" fill="#239a72"/><circle cx="168" cy="614.6" r="19.6" fill="none" stroke="#1f6e4e" stroke-width="6.4"/><circle cx="168" cy="614.6" r="19.6" fill="none" stroke="#7fc9ac" stroke-width="0.5" stroke-dasharray="1 1.2"/><circle cx="168" cy="614.6" r="15.6" fill="#f4fbf8"/><path d="M140.4 608.6L196 606.6V621.6L140.4 623z" fill="#2fc092"/><text x="168" y="617.2" font-family="Liberation Sans" font-weight="bold" font-size="8.4" fill="#fff" text-anchor="middle" textLength="32" lengthAdjust="spacingAndGlyphs">CAPRA</text><rect x="153.5" y="618.6" width="29" height="1.8" fill="#9fe6cb"/></svg>
<span class="t" style="left:122.00px;top:577.35px;font-size:4.5px;line-height:4.5px;color:#8e8e8e;letter-spacing:-0.160px;">Operational Excellence:</span>
<span class="t" style="left:106.00px;top:583.15px;font-size:4.5px;line-height:4.5px;color:#8e8e8e;letter-spacing:-0.086px;">Effective, Efficient, and Reliable Services</span>
<span class="t" style="left:88.80px;top:603.45px;font-size:5.1px;line-height:5.1px;color:#161616;letter-spacing:-0.267px;font-weight:bold;">Ongoing review and</span>
<span class="t" style="left:89.60px;top:608.25px;font-size:5.1px;line-height:5.1px;color:#161616;letter-spacing:-0.204px;font-weight:bold;">annual reporting to</span>
<span class="t" style="left:104.60px;top:612.85px;font-size:5.1px;line-height:5.1px;color:#161616;letter-spacing:-0.358px;font-weight:bold;">NRPA</span>
<div class="abs" style="left:93.5px;top:643.4px;width:46.2px;height:3px;background:#2d6c8c;"></div><div class="abs" style="left:143.7px;top:643.4px;width:45.6px;height:3px;background:#a92d22;"></div>
<svg class="abs" style="left:224px;top:205px;" width="10" height="8" viewBox="0 0 10 8"><path d="M5 1.2L8.6 6.2H1.4Z" fill="#6e6e6e"/></svg>
<div class="abs" style="left:225.6px;top:214.8px;width:6.6px;height:40.4px;background:#858585;border-radius:3.3px;"></div>
<svg class="abs" style="left:224.5px;top:640.5px;" width="9" height="7" viewBox="0 0 9 7"><path d="M4.5 6L8 1.2H1Z" fill="#6e6e6e"/></svg>
<svg class="abs" style="left:110.5px;top:546.5px;" width="10" height="15" viewBox="0 0 10 15"><path d="M1 1v11.2l2.7-2.5 1.9 4.3 1.7-.8-1.9-4.1h3.7z" fill="#fff" stroke="#111" stroke-width="0.9" stroke-linejoin="round"/></svg>
<span class="t" style="left:58.60px;top:654.95px;font-size:8.5px;line-height:8.5px;color:#555;letter-spacing:-0.238px;">Slide 2 of 53</span>
<svg class="abs" style="left:129.5px;top:653.5px;" width="12" height="12" viewBox="0 0 12 12"><circle cx="4.6" cy="2" r="1.2" fill="none" stroke="#444" stroke-width="0.9"/><path d="M1 4.2h7.2M4.6 4.2v3.2M4.6 7.4L2.6 11M4.6 7.4l1.2 1.6" fill="none" stroke="#444" stroke-width="0.9"/><path d="M6.4 9.4l1.6 1.6 3-3.4" fill="none" stroke="#444" stroke-width="0.9"/></svg>
<span class="t" style="left:143.00px;top:654.95px;font-size:8.5px;line-height:8.5px;color:#555;letter-spacing:-0.211px;">Accessibility: Good to go</span>
<!-- p_slide.slide -->
<div class="abs" style="left:422px;top:207px;width:602.4px;height:338.4px;background:#fff;border:1px solid #e9e9ee;box-shadow:0 0 3px rgba(0,0,0,0.05);"></div>
<span class="t" style="left:433.40px;top:234.67px;font-size:20px;line-height:20px;color:#111;letter-spacing:-0.016px;">The Community Services Department is proud of the progress</span>
<span class="t" style="left:433.40px;top:259.67px;font-size:20px;line-height:20px;color:#111;">we’ve made impacting Council Strategic Goals- Objectives- and</span>
<span class="t" style="left:433.40px;top:284.07px;font-size:20px;line-height:20px;color:#111;">the CSD Road Map all aligning with our Integrated Master Plan</span>
<svg class="abs" style="left:480px;top:310px;" width="250" height="220" viewBox="480 310 250 220"><ellipse cx="605.4" cy="419.5" rx="107.6" ry="97.4" fill="#fff" stroke="#1a1a1a" stroke-width="3"/><circle cx="588.2" cy="371.2" r="40" fill="#1b1e66" fill-opacity="0.94"/><circle cx="653" cy="386.5" r="38" fill="#660d14" fill-opacity="0.94"/><circle cx="552.6" cy="423.2" r="39" fill="#2a7367" fill-opacity="0.94"/><circle cx="654.2" cy="452" r="38.6" fill="#286a87" fill-opacity="0.94"/><circle cx="594.4" cy="475" r="39.4" fill="#575c4d" fill-opacity="0.94"/><circle cx="607.2" cy="420" r="21" fill="#c98b3e"/><circle cx="607.2" cy="420" r="21" fill="none" stroke="#d9a45c" stroke-width="1" opacity="0.6"/><text x="607.6" y="424.4" font-family="Liberation Sans" font-weight="bold" font-size="11.6" fill="#fff" text-anchor="middle" textLength="36.5" lengthAdjust="spacingAndGlyphs">VISION</text><text x="588.6" y="357.6" font-family="Liberation Sans" font-weight="bold" font-size="4.2" fill="#fff" fill-opacity="0.92" text-anchor="middle" textLength="56" lengthAdjust="spacingAndGlyphs">QUALITY GOVERNANCE</text><text x="588.6" y="364.2" font-family="Liberation Sans" font-weight="normal" font-size="3.3" fill="#fff" fill-opacity="0.92" text-anchor="middle" textLength="35" lengthAdjust="spacingAndGlyphs">Communication and</text><text x="588.6" y="368.2" font-family="Liberation Sans" font-weight="normal" font-size="3.3" fill="#fff" fill-opacity="0.92" text-anchor="middle" textLength="20" lengthAdjust="spacingAndGlyphs">Engagement</text><text x="588.6" y="374.8" font-family="Liberation Sans" font-weight="normal" font-size="3.3" fill="#fff" fill-opacity="0.92" text-anchor="middle" textLength="43" lengthAdjust="spacingAndGlyphs">Intergovernmental, Tribal,</text><text x="588.6" y="378.8" font-family="Liberation Sans" font-weight="normal" font-size="3.3" fill="#fff" fill-opacity="0.92" text-anchor="middle" textLength="38" lengthAdjust="spacingAndGlyphs">and Regional Relations</text><text x="588.6" y="385.6" font-family="Liberation Sans" font-weight="normal" font-size="3.3" fill="#fff" fill-opacity="0.92" text-anchor="middle" textLength="32" lengthAdjust="spacingAndGlyphs">Fiscal Stewardship</text><text x="649" y="372" font-family="Liberation Sans" font-weight="bold" font-size="4.2" fill="#fff" fill-opacity="0.92" text-anchor="middle" textLength="62" lengthAdjust="spacingAndGlyphs">OPERATIONAL EXCELLENCE</text><text x="649" y="379" font-family="Liberation Sans" font-weight="normal" font-size="3.3" fill="#fff" fill-opacity="0.92" text-anchor="middle" textLength="38" lengthAdjust="spacingAndGlyphs">Effective, Efficient, and</text><text x="649" y="383" font-family="Liberation Sans" font-weight="normal" font-size="3.3" fill="#fff" fill-opacity="0.92" text-anchor="middle" textLength="30" lengthAdjust="spacingAndGlyphs">Reliable Services</text><text x="649" y="390" font-family="Liberation Sans" font-weight="normal" font-size="3.3" fill="#fff" fill-opacity="0.92" text-anchor="middle" textLength="32" lengthAdjust="spacingAndGlyphs">Infrastructure Asset</text><text x="649" y="394" font-family="Liberation Sans" font-weight="normal" font-size="3.3" fill="#fff" fill-opacity="0.92" text-anchor="middle" textLength="22" lengthAdjust="spacingAndGlyphs">Management</text><text x="649" y="401" font-family="Liberation Sans" font-weight="normal" font-size="3.3" fill="#fff" fill-opacity="0.92" text-anchor="middle" textLength="38" lengthAdjust="spacingAndGlyphs">Employee Recruitment</text><text x="649" y="405" font-family="Liberation Sans" font-weight="normal" font-size="3.3" fill="#fff" fill-opacity="0.92" text-anchor="middle" textLength="24" lengthAdjust="spacingAndGlyphs">and Retention</text><text x="553" y="402" font-family="Liberation Sans" font-weight="bold" font-size="4.2" fill="#fff" fill-opacity="0.92" text-anchor="middle" textLength="42" lengthAdjust="spacingAndGlyphs">ENVIRONMENTAL</text><text x="553" y="406.6" font-family="Liberation Sans" font-weight="bold" font-size="4.2" fill="#fff" fill-opacity="0.92" text-anchor="middle" textLength="36" lengthAdjust="spacingAndGlyphs">STEWARDSHIP</text><text x="553" y="413.4" font-family="Liberation Sans" font-weight="normal" font-size="3.3" fill="#fff" fill-opacity="0.92" text-anchor="middle" textLength="44" lengthAdjust="spacingAndGlyphs">Natural Resource Protection</text><text x="553" y="419.6" font-family="Liberation Sans" font-weight="normal" font-size="3.3" fill="#fff" fill-opacity="0.92" text-anchor="middle" textLength="46" lengthAdjust="spacingAndGlyphs">Greenhouse Gas Reduction</text><text x="553" y="426.4" font-family="Liberation Sans" font-weight="normal" font-size="3.3" fill="#fff" fill-opacity="0.92" text-anchor="middle" textLength="26" lengthAdjust="spacingAndGlyphs">Carbon-Neutral</text><text x="553" y="430.4" font-family="Liberation Sans" font-weight="normal" font-size="3.3" fill="#fff" fill-opacity="0.92" text-anchor="middle" textLength="24" lengthAdjust="spacingAndGlyphs">Energy Supply</text><text x="553" y="437" font-family="Liberation Sans" font-weight="normal" font-size="3.3" fill="#fff" fill-opacity="0.92" text-anchor="middle" textLength="32" lengthAdjust="spacingAndGlyphs">Water Conservation</text><text x="553" y="443.8" font-family="Liberation Sans" font-weight="normal" font-size="3.3" fill="#fff" fill-opacity="0.92" text-anchor="middle" textLength="36" lengthAdjust="spacingAndGlyphs">Waste Management</text><text x="652" y="435.8" font-family="Liberation Sans" font-weight="bold" font-size="4.2" fill="#fff" fill-opacity="0.92" text-anchor="middle" textLength="48" lengthAdjust="spacingAndGlyphs">ECONOMIC VITALITY</text><text x="652" y="443" font-family="Liberation Sans" font-weight="normal" font-size="3.3" fill="#fff" fill-opacity="0.92" text-anchor="middle" textLength="14" lengthAdjust="spacingAndGlyphs">Housing</text><text x="652" y="449.2" font-family="Liberation Sans" font-weight="normal" font-size="3.3" fill="#fff" fill-opacity="0.92" text-anchor="middle" textLength="26" lengthAdjust="spacingAndGlyphs">Local Business</text><text x="652" y="455.8" font-family="Liberation Sans" font-weight="normal" font-size="3.3" fill="#fff" fill-opacity="0.92" text-anchor="middle" textLength="42" lengthAdjust="spacingAndGlyphs">Downtown Revitalization</text><text x="652" y="462.4" font-family="Liberation Sans" font-weight="normal" font-size="3.3" fill="#fff" fill-opacity="0.92" text-anchor="middle" textLength="46" lengthAdjust="spacingAndGlyphs">Tourism and Special Events</text><text x="652" y="469" font-family="Liberation Sans" font-weight="normal" font-size="3.3" fill="#fff" fill-opacity="0.92" text-anchor="middle" textLength="40" lengthAdjust="spacingAndGlyphs">Community Broadband</text><text x="594" y="446.6" font-family="Liberation Sans" font-weight="bold" font-size="4.2" fill="#fff" fill-opacity="0.92" text-anchor="middle" textLength="38" lengthAdjust="spacingAndGlyphs">QUALITY OF LIFE</text><text x="594" y="453.4" font-family="Liberation Sans" font-weight="normal" font-size="3.3" fill="#fff" fill-opacity="0.92" text-anchor="middle" textLength="32" lengthAdjust="spacingAndGlyphs">Health, Wellbeing,</text><text x="594" y="457.4" font-family="Liberation Sans" font-weight="normal" font-size="3.3" fill="#fff" fill-opacity="0.92" text-anchor="middle" textLength="34" lengthAdjust="spacingAndGlyphs">and Social Services</text><text x="594" y="464" font-family="Liberation Sans" font-weight="normal" font-size="3.3" fill="#fff" fill-opacity="0.92" text-anchor="middle" textLength="30" lengthAdjust="spacingAndGlyphs">Diversity, Equity,</text><text x="594" y="468" font-family="Liberation Sans" font-weight="normal" font-size="3.3" fill="#fff" fill-opacity="0.92" text-anchor="middle" textLength="24" lengthAdjust="spacingAndGlyphs">and Inclusivity</text><text x="594" y="474.4" font-family="Liberation Sans" font-weight="normal" font-size="3.3" fill="#fff" fill-opacity="0.92" text-anchor="middle" textLength="14" lengthAdjust="spacingAndGlyphs">Mobility</text><text x="594" y="480.8" font-family="Liberation Sans" font-weight="normal" font-size="3.3" fill="#fff" fill-opacity="0.92" text-anchor="middle" textLength="42" lengthAdjust="spacingAndGlyphs">Educational, Historical,</text><text x="594" y="484.8" font-family="Liberation Sans" font-weight="normal" font-size="3.3" fill="#fff" fill-opacity="0.92" text-anchor="middle" textLength="40" lengthAdjust="spacingAndGlyphs">and Cultural Amenities</text><text x="594" y="491.2" font-family="Liberation Sans" font-weight="normal" font-size="3.3" fill="#fff" fill-opacity="0.92" text-anchor="middle" textLength="34" lengthAdjust="spacingAndGlyphs">Open Space, Parks,</text><text x="594" y="495.2" font-family="Liberation Sans" font-weight="normal" font-size="3.3" fill="#fff" fill-opacity="0.92" text-anchor="middle" textLength="26" lengthAdjust="spacingAndGlyphs">and Recreation</text><text x="594" y="501.6" font-family="Liberation Sans" font-weight="normal" font-size="3.3" fill="#fff" fill-opacity="0.92" text-anchor="middle" textLength="22" lengthAdjust="spacingAndGlyphs">Public Safety</text></svg>
<svg class="abs" style="left:750px;top:310px;" width="180" height="220" viewBox="750 310 180 220"><defs><linearGradient id="sky" x1="0" y1="0" x2="0" y2="1"><stop offset="0" stop-color="#8fb4e0"/><stop offset="1" stop-color="#e6edf4"/></linearGradient><linearGradient id="grs" x1="0" y1="0" x2="0" y2="1"><stop offset="0" stop-color="#9c9a80"/><stop offset="0.55" stop-color="#7c8a52"/><stop offset="1" stop-color="#6a8448"/></linearGradient><filter id="pb" x="-3%" y="-3%" width="106%" height="106%"><feGaussianBlur stdDeviation="0.7"/></filter><clipPath id="impc"><rect x="765.6" y="323.4" width="150" height="193.6"/></clipPath></defs><rect x="764.6" y="322.4" width="152" height="195.6" fill="#7f8c62" stroke="#0c0c0c" stroke-width="2"/><g clip-path="url(#impc)"><g filter="url(#pb)"><rect x="764" y="322" width="153" height="40" fill="url(#sky)"/><rect x="816" y="324" width="62" height="14" fill="#5f92d4"/><path d="M764 340c10-8 24-4 34-10 10-5 16 0 22 4v14h-56z" fill="#f4f6f8"/><path d="M872 324c8 0 14 4 20 2 8-2 16-2 25 2v34h-30c-4-10-10-18-15-38z" fill="#eef1f4"/><path d="M846 330c4-4 10-3 14 1 6 0 9 4 9 8h-23z" fill="#f4f6f8" opacity="0.9"/><path d="M864 372c10-6 20-10 30-10s18 2 24 4v80h-54z" fill="#6f7146"/><path d="M864 400h54v46h-54z" fill="#5c6e3c"/><path d="M859 331l6 8-3 1 6 9-4 1 7 10-5 1 5 8h-26l5-8-4-1 6-10-3-1 5-9-2-1z" fill="#2c4630"/><path d="M879.6 344c0-5 4-8.400 8-8.400 5 0 8 3.400 7.400 7.400l-2 1.600-13 1z" fill="#4a4c50"/><ellipse cx="887.600" cy="348" rx="4" ry="4" fill="#b98a72"/><path d="M876 358c2-5 6-7 12-7s9 2 11 6l-1 18h-21z" fill="#93514e"/><path d="M878 356l18 16M884 352l14 14M876 364l14 10M896 354l-18 18M890 352l-14 14" stroke="#dcc4c0" stroke-width="0.700" opacity="0.8"/><path d="M877 375h21v16h-21z" fill="#3a3c44"/><path d="M901.600 348c0-4 3-6.400 7-6.400s7 2.400 7 6.400l-14 1.600z" fill="#2c2e34"/><ellipse cx="908" cy="351" rx="3.600" ry="3.800" fill="#c49a82"/><path d="M899 362c2-5 5-7 10-7 4 0 7 2 8 5v25h-17c-2-8-2-16-1-23z" fill="#1d8a5c"/><path d="M880 368l20-6 2 5-20 7z" fill="#1d8a5c"/><path d="M901 385h15v8h-15z" fill="#20242c"/><path d="M905 393h5.600l1 30h-5z" fill="#c9a284"/><path d="M904 421h9v5h-9z" fill="#2a2a2a"/><circle cx="887" cy="411" r="13" fill="none" stroke="#1c1c1c" stroke-width="2.400"/><circle cx="871" cy="398" r="9" fill="none" stroke="#222" stroke-width="1.800"/><path d="M871 398l13-18 8 26M884 380l12-3M892 394l10-14" stroke="#262626" stroke-width="1.700" fill="none"/><path d="M896 396l8-14" stroke="#a02a2a" stroke-width="1.600"/><rect x="764" y="412" width="101" height="30" fill="url(#grs)"/><g fill="#bcb8a8"><ellipse cx="786" cy="420" rx="9" ry="3"/><ellipse cx="822" cy="417" rx="8" ry="2.600"/><ellipse cx="774" cy="428.600" rx="7" ry="2.400"/><ellipse cx="806" cy="427" rx="8" ry="2.200"/><ellipse cx="838" cy="422" rx="5" ry="1.800"/></g><path d="M764 432c20-3 50-2 101 0v10h-101z" fill="#6a8446"/></g><rect x="765.6" y="346" width="98.600" height="66.400" fill="#a51e2d"/><text x="772" y="344.400" font-family="Liberation Sans" font-size="4.200" fill="#dfe6ec" textLength="72" lengthAdjust="spacingAndGlyphs">Community Services Department</text><text x="773.6" y="363.2" font-family="Liberation Sans" font-weight="bold" font-size="16.4" fill="#fbf3ec" textLength="83.6" lengthAdjust="spacingAndGlyphs" stroke="#fbf3ec" stroke-width="0.700" stroke-linejoin="round">INTEGRATED</text><text x="773.6" y="385" font-family="Liberation Sans" font-weight="bold" font-size="24" fill="#fbf3ec" textLength="83.6" lengthAdjust="spacingAndGlyphs" stroke="#fbf3ec" stroke-width="0.700" stroke-linejoin="round">MASTER</text><text x="773.6" y="406" font-family="Liberation Sans" font-weight="bold" font-size="23" fill="#fbf3ec" textLength="54" lengthAdjust="spacingAndGlyphs" stroke="#fbf3ec" stroke-width="0.700" stroke-linejoin="round">PLAN</text><rect x="765.6" y="441.400" width="150" height="5.400" fill="#2f7f7a"/><rect x="765.6" y="444.600" width="150" height="1" fill="#5fb0a8"/><g filter="url(#pb)"><rect x="765.6" y="447.600" width="46" height="70" fill="#3a8ee0"/><path d="M765.6 476c8-4 16-2 24-5 8-2 14 0 22-2v26h-46z" fill="#c9d4e2" opacity="0.850"/><rect x="765.6" y="496" width="46" height="22" fill="#4a9a42"/><path d="M769 464c3-9 11-15 18-13 8-4 15 3 18 12-6-3-10-1-17 3-8-5-13-5-19-2z" fill="#2c2024"/><ellipse cx="787.600" cy="467" rx="4.400" ry="4.800" fill="#6a4438"/><path d="M775 478c6-5 19-5 25 0l3 16-8 3-2 20h-10l-2-20-8-3z" fill="#22222c"/><path d="M781 498h11v13h-11z" fill="#b82c2c"/><path d="M766 486h7v30h-7z" fill="#d8cfc4"/><path d="M767 500h5v16h-5z" fill="#c23428"/><path d="M800 484h8v18h-8z" fill="#d8d0c8"/><rect x="813.2" y="447.600" width="43" height="35.400" fill="#3a2420"/><rect x="813.2" y="447.600" width="43" height="9" fill="#b8d6f0"/><path d="M815 458c2-6 15-7 18-1l-1 4h-16z" fill="#c8b498"/><ellipse cx="824" cy="465" rx="5.400" ry="6" fill="#d09a74"/><path d="M819 468c1 9 9 9 10 0 1 6-1 12-5 14-4-2-6-8-5-14z" fill="#c8742c"/><path d="M834 459c2-5 13-5 15 0l1 3h-17z" fill="#3a3430"/><ellipse cx="841.600" cy="467" rx="5" ry="6" fill="#e2b49a"/><path d="M832 483c2-9 18-9 21 0z" fill="#d02228"/><rect x="851" y="456" width="5" height="22" fill="#5a4a40"/><rect x="813.2" y="483.600" width="43" height="34" fill="#a87c34"/><rect x="813.2" y="483.600" width="43" height="15" fill="#8fa0b8"/><path d="M813.200 488c10-5 20-1 30-4 5-1 8 1 13 0v9h-43z" fill="#e4e4de"/><rect x="813.2" y="497" width="43" height="5" fill="#566a80"/><rect x="813.2" y="502" width="43" height="4" fill="#c8b890"/><rect x="857" y="426.600" width="47" height="72" fill="#7aa63a"/><rect x="857" y="426.600" width="47" height="17" fill="#2e4428"/><path d="M861 427v15M868 427v16M879 427v14M889 427v16M897 427v14" stroke="#1c2a1c" stroke-width="2.400"/><rect x="858" y="428" width="6" height="13" fill="#d4dce0" opacity="0.700"/><rect x="882" y="428" width="5" height="9" fill="#cdd6da" opacity="0.600"/><path d="M857 474c10-6 22 0 32-2 6-1 10 2 15 0v26h-47z" fill="#7a6a56"/><path d="M857 484c8-4 14-2 20-4l-6 18h-14z" fill="#8ab040"/><ellipse cx="881" cy="447.600" rx="3.600" ry="3.600" fill="#20241c"/><path d="M873 454c3-4 13-4 16 0l4 8-6 3-1 10h-8l-1-10-6-3z" fill="#363c2a"/><circle cx="878" cy="486" r="7" fill="none" stroke="#1a1a1a" stroke-width="2"/><circle cx="886" cy="470" r="6" fill="none" stroke="#1a1a1a" stroke-width="1.700"/><path d="M878 486l6-16" stroke="#222" stroke-width="1.500"/></g><rect x="857" y="426.600" width="47" height="72" fill="none" stroke="#ecece4" stroke-width="1"/><rect x="856.800" y="498.600" width="47.200" height="18.400" fill="#f6f4ee"/><text x="880.400" y="507.600" font-family="Liberation Sans" font-weight="bold" font-size="5.600" fill="#4a4a4a" text-anchor="middle" textLength="39" lengthAdjust="spacingAndGlyphs">LOS ALAMOS</text><rect x="863" y="510.800" width="35" height="1.200" fill="#a8a8a0"/><rect x="904.400" y="447.600" width="11.200" height="69.400" fill="#6e1a68"/><circle cx="907.4" cy="455.5" r="0.92" fill="#dc5cc8" opacity="0.8"/><circle cx="906.5" cy="453.0" r="0.92" fill="#dc5cc8" opacity="0.8"/><circle cx="914.2" cy="502.5" r="1.21" fill="#dc5cc8" opacity="0.8"/><circle cx="907.2" cy="484.7" r="0.82" fill="#dc5cc8" opacity="0.8"/><circle cx="906.7" cy="455.7" r="0.77" fill="#dc5cc8" opacity="0.8"/><circle cx="914.3" cy="504.5" r="1.25" fill="#dc5cc8" opacity="0.8"/><circle cx="913.0" cy="461.6" r="0.85" fill="#dc5cc8" opacity="0.8"/><circle cx="911.3" cy="497.9" r="1.28" fill="#dc5cc8" opacity="0.8"/><circle cx="913.8" cy="454.4" r="1.08" fill="#dc5cc8" opacity="0.8"/><circle cx="911.7" cy="482.7" r="0.74" fill="#dc5cc8" opacity="0.8"/><circle cx="909.7" cy="454.5" r="1.35" fill="#dc5cc8" opacity="0.8"/><circle cx="913.7" cy="485.5" r="0.84" fill="#dc5cc8" opacity="0.8"/><circle cx="914.1" cy="487.1" r="1.31" fill="#dc5cc8" opacity="0.8"/><circle cx="913.5" cy="482.8" r="0.93" fill="#dc5cc8" opacity="0.8"/><circle cx="911.0" cy="477.6" r="0.73" fill="#dc5cc8" opacity="0.8"/><circle cx="908.1" cy="503.3" r="0.63" fill="#dc5cc8" opacity="0.8"/><circle cx="905.5" cy="490.8" r="0.82" fill="#dc5cc8" opacity="0.8"/><circle cx="910.3" cy="480.3" r="0.87" fill="#dc5cc8" opacity="0.8"/><circle cx="915.0" cy="461.7" r="0.93" fill="#dc5cc8" opacity="0.8"/><circle cx="907.0" cy="491.2" r="0.82" fill="#dc5cc8" opacity="0.8"/><circle cx="908.6" cy="498.9" r="0.86" fill="#dc5cc8" opacity="0.8"/><circle cx="910.6" cy="509.5" r="0.68" fill="#dc5cc8" opacity="0.8"/><circle cx="905.6" cy="463.9" r="1.21" fill="#dc5cc8" opacity="0.8"/><circle cx="911.2" cy="464.5" r="0.86" fill="#dc5cc8" opacity="0.8"/><circle cx="906.8" cy="479.5" r="0.63" fill="#dc5cc8" opacity="0.8"/><circle cx="912.0" cy="509.0" r="1.36" fill="#dc5cc8" opacity="0.8"/><circle cx="912.3" cy="513.3" r="0.61" fill="#dc5cc8" opacity="0.8"/><circle cx="907.9" cy="513.7" r="1.22" fill="#dc5cc8" opacity="0.8"/><circle cx="909.1" cy="512.2" r="1.10" fill="#dc5cc8" opacity="0.8"/><circle cx="913.2" cy="468.3" r="0.75" fill="#dc5cc8" opacity="0.8"/><circle cx="909.4" cy="457.7" r="0.91" fill="#dc5cc8" opacity="0.8"/><circle cx="914.6" cy="470.9" r="0.61" fill="#dc5cc8" opacity="0.8"/><circle cx="905.4" cy="459.9" r="1.23" fill="#dc5cc8" opacity="0.8"/><circle cx="908.6" cy="468.1" r="0.68" fill="#dc5cc8" opacity="0.8"/><circle cx="914.8" cy="477.1" r="0.77" fill="#dc5cc8" opacity="0.8"/><circle cx="905.6" cy="452.2" r="0.73" fill="#dc5cc8" opacity="0.8"/><circle cx="911.8" cy="458.6" r="0.63" fill="#dc5cc8" opacity="0.8"/><circle cx="909.9" cy="465.3" r="1.40" fill="#dc5cc8" opacity="0.8"/><circle cx="906.2" cy="484.2" r="1.22" fill="#dc5cc8" opacity="0.8"/><circle cx="909.1" cy="515.2" r="0.98" fill="#dc5cc8" opacity="0.8"/><circle cx="907.4" cy="476.2" r="0.63" fill="#dc5cc8" opacity="0.8"/><circle cx="909.2" cy="465.3" r="1.31" fill="#dc5cc8" opacity="0.8"/><circle cx="913.3" cy="482.2" r="0.63" fill="#dc5cc8" opacity="0.8"/><circle cx="907.5" cy="464.9" r="0.77" fill="#dc5cc8" opacity="0.8"/><circle cx="907.3" cy="507.2" r="0.71" fill="#dc5cc8" opacity="0.8"/><circle cx="905.5" cy="511.1" r="1.05" fill="#dc5cc8" opacity="0.8"/><circle cx="914.9" cy="475.7" r="1.32" fill="#dc5cc8" opacity="0.8"/><circle cx="911.5" cy="501.9" r="1.20" fill="#dc5cc8" opacity="0.8"/><circle cx="909.9" cy="454.8" r="0.77" fill="#dc5cc8" opacity="0.8"/><circle cx="913.7" cy="509.2" r="1.34" fill="#dc5cc8" opacity="0.8"/><circle cx="908.4" cy="492.8" r="1.24" fill="#dc5cc8" opacity="0.8"/><circle cx="911.4" cy="503.5" r="1.02" fill="#dc5cc8" opacity="0.8"/><circle cx="911.5" cy="494.8" r="0.81" fill="#dc5cc8" opacity="0.8"/><circle cx="914.2" cy="513.0" r="0.66" fill="#dc5cc8" opacity="0.8"/><circle cx="914.7" cy="513.4" r="1.13" fill="#dc5cc8" opacity="0.8"/><circle cx="905.4" cy="509.2" r="0.70" fill="#dc5cc8" opacity="0.8"/></g></svg>
<svg class="abs" style="left:490px;top:528px;" width="470" height="20" viewBox="490 528 470 20"><path d="M497.4 530H712.4L718.4 545H497.4Z" fill="#27698b"/><path d="M730 530H948.6V545H736Z" fill="#a82a22"/></svg>
<div class="abs" style="left:520px;top:546px;width:170px;height:7px;background:linear-gradient(to bottom,rgba(120,120,120,0.5),rgba(160,160,160,0.15));filter:blur(1.6px);border-radius:3px;"></div>
<div class="abs" style="left:238px;top:556px;width:974px;height:1px;background:#f6f6f6;"></div>
<svg class="abs" style="left:1208.2px;top:505.6px;" width="10" height="33" viewBox="0 0 10 33"><g fill="#7a7a7a"><path d="M1.6 1.4h7L5.1 6.2z"/><path d="M5.1 11.2L8.6 15.4H1.6zM5.1 15.2L8.6 19.4H1.6z"/><path d="M5.1 27L8.6 22.8H1.6zM5.1 31.2L8.6 27H1.6z"/></g></svg>
<div class="abs" style="left:1210.6px;top:223.4px;width:6px;height:10px;background:#8a8a8a;border-radius:0 0 2.5px 2.5px;"></div>
<!-- p_notes.notes -->
<span class="t" style="left:246.80px;top:563.90px;font-size:10.6px;line-height:10.6px;color:#585858;letter-spacing:0.209px;">The Community Services Department is proud of the progress we've made in advancing County Council's Strategic Goals, Objectives, and the CSD Road Map, all aligned with our Integrated</span>
<span class="t" style="left:246.80px;top:577.50px;font-size:10.6px;line-height:10.6px;color:#585858;letter-spacing:0.315px;">Master Plan. These efforts support our commitment to achieving our quality-of-life goal for the community. This group will probably be more familiar with the Library Strategic Plan, which took</span>
<span class="t" style="left:246.80px;top:590.70px;font-size:10.6px;line-height:10.6px;color:#585858;letter-spacing:0.273px;">its direction from these broader plans and goals. In tonight's presentation, I'll walk you through our most significant accomplishments and show how each one connects to a specific Strategic</span>
<span class="t" style="left:246.80px;top:604.10px;font-size:10.6px;line-height:10.6px;color:#585858;letter-spacing:0.255px;">Goal, the supporting Objective, and the corresponding CSD Road Map item.</span>
<span class="t" style="left:1037.00px;top:619.50px;font-size:15.4px;line-height:15.4px;color:#cfcfcf;letter-spacing:0.551px;">Activate Windows</span>
<span class="t" style="left:1037.00px;top:640.90px;font-size:11px;line-height:11px;color:#e2e2e2;letter-spacing:0.408px;">Go to Settings to activate Windows.</span>
<svg class="abs" style="left:880px;top:648px;" width="340" height="20" viewBox="880 648 340 20"><g fill="none" stroke="#444" stroke-width="0.9"><path d="M898.6 657.4h10.6M898.6 660.2h10.6M898.6 663h10.6"/><path d="M901.6 655.2l2.3-2 2.3 2"/></g><rect x="947.5" y="651.5" width="29.5" height="14" fill="#ececec"/><g fill="none" stroke="#4a4a4a" stroke-width="0.9"><rect x="958.4" y="654.2" width="10.8" height="9.4"/><rect x="961.6" y="656.2" width="5.6" height="3.6"/><path d="M958.4 661.6h10.8"/></g><g fill="none" stroke="#4a4a4a" stroke-width="0.9"><rect x="988.6" y="654.4" width="4.4" height="3.6"/><rect x="995" y="654.4" width="4.4" height="3.6"/><rect x="988.6" y="660" width="4.4" height="3.6"/><rect x="995" y="660" width="4.4" height="3.6"/></g><g fill="none" stroke="#4a4a4a" stroke-width="0.9"><rect x="1019.4" y="654.2" width="9.6" height="9.4"/><path d="M1024.2 654.2v9.4M1021 657h1.8M1021 659.4h1.8M1025.8 657h1.8M1025.8 659.4h1.8"/></g><g fill="none" stroke="#4a4a4a" stroke-width="0.9"><path d="M1049.6 654h10.2"/><rect x="1050.6" y="654" width="8.2" height="5.6"/><path d="M1054.7 659.6v4M1052.4 663.8h4.6"/></g><path d="M1074.6 659h5" stroke="#555" stroke-width="0.9"/><path d="M1084.7 659h75" stroke="#8a8a8a" stroke-width="0.8"/><path d="M1122.4 656.6v4.8" stroke="#8a8a8a" stroke-width="0.8"/><rect x="1105.9" y="654.4" width="2.8" height="9.2" fill="#555"/><path d="M1164 659h5M1166.5 656.5v5" stroke="#555" stroke-width="0.9"/><g fill="none" stroke="#444" stroke-width="0.9"><rect x="1207.6" y="656.2" width="5.6" height="5.6"/><path d="M1208.6 653.8l1.8-1.6 1.8 1.6M1208.6 664.2l1.8 1.6 1.8-1.6M1205.4 657.2l-1.6 1.8 1.6 1.8M1215.4 657.2l1.6 1.8-1.6 1.8"/></g></svg>
<span class="t" style="left:911.80px;top:654.95px;font-size:8.5px;line-height:8.5px;color:#444;letter-spacing:-0.251px;">Notes</span>
<span class="t" style="left:1180.00px;top:655.40px;font-size:7.6px;line-height:7.6px;color:#555;letter-spacing:-0.406px;">62%</span>
<svg class="abs" style="left:609.5px;top:658.5px;" width="8" height="10" viewBox="0 0 8 10"><path d="M1 1v7l2-1.8 1.4 2.6" fill="none" stroke="#9a9a9a" stroke-width="0.8"/></svg>
<!-- p_video.video -->
<div class="abs" style="left:1070.8px;top:114.8px;width:190.4px;height:108.8px;background:#0a0a0a;border-radius:3px;"></div>
<div class="abs" style="left:1072.2px;top:116.2px;width:187.6px;height:106px;background:#f6f6f6;border-radius:2px;"></div>
<svg class="abs" style="left:1060px;top:108px;" width="220" height="124" viewBox="1060 108 220 124"><defs><clipPath id="vtop"><rect x="1074.4" y="119.2" width="184.4" height="20.6" rx="1.5"/></clipPath><clipPath id="vl"><rect x="1074.4" y="143" width="61.4" height="77.2" rx="2.5"/></clipPath><clipPath id="vr"><rect x="1138" y="143" width="120.8" height="77.2" rx="2.5"/></clipPath><linearGradient id="ceil" x1="0" y1="0" x2="1" y2="1"><stop offset="0" stop-color="#989287"/><stop offset="0.6" stop-color="#aea89c"/><stop offset="1" stop-color="#b9b4a8"/></linearGradient><filter id="vb" x="-5%" y="-5%" width="110%" height="110%"><feGaussianBlur stdDeviation="0.9"/></filter><filter id="vb2" x="-5%" y="-5%" width="110%" height="110%"><feGaussianBlur stdDeviation="0.55"/></filter></defs><g clip-path="url(#vtop)"><g filter="url(#vb2)"><rect x="1072" y="117" width="190" height="25" fill="#a9aaa6"/><rect x="1074" y="119" width="30" height="8" fill="#cfcfca"/><rect x="1074" y="126" width="30" height="9" fill="#aaa9a2"/><rect x="1074" y="135" width="32" height="6" fill="#4a4742"/><ellipse cx="1093.6" cy="133" rx="2.6" ry="3.4" fill="#6e4a3a"/><ellipse cx="1100" cy="135" rx="3" ry="2.6" fill="#9a8a7a"/><rect x="1104" y="122" width="8" height="12" fill="#3f86b0"/><rect x="1106" y="124.5" width="4" height="7" fill="#dff2fa"/><rect x="1113.4" y="122" width="9" height="12" fill="#5a92b8"/><rect x="1115.4" y="124" width="5" height="8" fill="#e8f4fa"/><rect x="1127.6" y="123" width="7" height="12" fill="#20263a"/><rect x="1104" y="134.6" width="32" height="6" fill="#77736a"/><ellipse cx="1117" cy="136" rx="4.4" ry="3.6" fill="#3c4250"/><rect x="1136" y="118.6" width="15.4" height="15.4" fill="#efefeb"/><rect x="1152" y="120" width="18.6" height="15" fill="#d9d5c2"/><rect x="1136" y="134" width="16" height="6.6" fill="#9a8e7c"/><rect x="1152" y="134" width="18.6" height="6.6" fill="#c49c5a"/><rect x="1170.6" y="118" width="13" height="23" fill="#aeb2b6"/><rect x="1183.6" y="120.4" width="13.4" height="19" fill="#2b7a9c"/><rect x="1186" y="124" width="3.6" height="12" fill="#a8e4f4"/><rect x="1191" y="124" width="3.6" height="12" fill="#8fd6ee"/><rect x="1197" y="118" width="35" height="23" fill="#b9bcc0"/><ellipse cx="1214" cy="137" rx="5" ry="3" fill="#4a4c52"/><ellipse cx="1209" cy="131" rx="5" ry="4" fill="#d6d9de"/><rect x="1231" y="118" width="28" height="23" fill="#9c968e"/><rect x="1238" y="119.4" width="9" height="2.6" fill="#f4f3ee"/><rect x="1251" y="120" width="7" height="2.4" fill="#f4f3ee"/><ellipse cx="1237.6" cy="127.6" rx="3.8" ry="4.4" fill="#5e382c"/><ellipse cx="1238" cy="129" rx="2.4" ry="3" fill="#c39886"/><path d="M1230.400 141c.6-6 4-8 8.400-8s8 2 8.600 8z" fill="#bfa0aa"/><ellipse cx="1252" cy="131" rx="3.400" ry="3.600" fill="#3c2e2a"/><rect x="1247" y="134" width="12" height="7" fill="#2e2a2c"/></g></g><g clip-path="url(#vl)"><g filter="url(#vb)"><rect x="1072" y="141" width="66" height="82" fill="#cbc8c0"/><rect x="1074" y="143" width="16" height="60" fill="#c2bfb6"/><rect x="1124" y="143" width="12" height="78" fill="#d3cfc6"/><rect x="1126" y="186" width="10" height="3" fill="#b8a58c"/><path d="M1096.600 182c-2.400-16 3.400-28.600 13.600-28.600 10 0 15.600 10.600 13.800 27-.6 6 .8 11 1.800 15.600h-31c1.400-4.600 2.400-9 1.800-14z" fill="#8a583e"/><ellipse cx="1110.400" cy="173" rx="7.200" ry="10" fill="#d2a48c"/><path d="M1102.600 169.600c1-8.400 5-11.800 8.400-11.600 4.400.2 7 3.800 7.400 10-2.600-3.800-5-5.600-7.800-5.800-3.200 0-5.600 2.800-8 7.400z" fill="#96603f"/><path d="M1106.600 176.600c2 1.600 5.400 1.600 7.400 0-.8 2.200-6.600 2.200-7.400 0z" fill="#f1e4dc"/><path d="M1086 222c.6-15 7-22 15-24 3 4.600 14 4.600 17.400 0 8 2 15 8.600 16 24z" fill="#7f796e"/><path d="M1103.600 197.600l6.600 9 6.600-9c-3.400 2-9.800 2-13.200 0z" fill="#cfa48c"/><ellipse cx="1080" cy="201" rx="6.400" ry="5" fill="#b09880"/><rect x="1073" y="204" width="13" height="18" fill="#8a7664"/></g></g><circle cx="1080.400" cy="148.200" r="2.800" fill="#161616"/><path d="M1078.800 147.300h2.200v1.900h-2.200z" fill="#efefef"/><path d="M1081.200 148l1.100-.7v1.900l-1.100-.7z" fill="#efefef"/><g clip-path="url(#vr)"><g filter="url(#vb)"><rect x="1136" y="141" width="125" height="82" fill="#a39d90"/><path d="M1136 141h125v30l-42 -4 -20 12-63-14z" fill="url(#ceil)"/><rect x="1150" y="143.4" width="37" height="6.4" rx="1.2" fill="#fdfdf8" transform="skewX(0)" transform-origin="1168.5 146.6"/><rect x="1148.5" y="142.20000000000002" width="40" height="8.8" rx="2" fill="#fff" opacity="0.28"/><rect x="1221" y="146.6" width="31" height="8" rx="1.2" fill="#fdfdf8" transform="skewX(-10)" transform-origin="1236.5 150.6"/><rect x="1219.5" y="145.4" width="34" height="10.4" rx="2" fill="#fff" opacity="0.28"/><rect x="1164.6" y="160" width="21.4" height="4" rx="1.2" fill="#fdfdf8" transform="skewX(0)" transform-origin="1175.3 162.0"/><rect x="1163.1" y="158.8" width="24.4" height="6.4" rx="2" fill="#fff" opacity="0.28"/><rect x="1208" y="161.4" width="20.6" height="4.4" rx="1.2" fill="#fdfdf8" transform="skewX(-4)" transform-origin="1218.3 163.6"/><rect x="1206.5" y="160.20000000000002" width="23.6" height="6.800000000000001" rx="2" fill="#fff" opacity="0.28"/><rect x="1170" y="167.8" width="15" height="3" rx="1.2" fill="#fdfdf8" transform="skewX(0)" transform-origin="1177.5 169.3"/><rect x="1168.5" y="166.60000000000002" width="18" height="5.4" rx="2" fill="#fff" opacity="0.28"/><rect x="1201" y="168.2" width="14.6" height="3.4" rx="1.2" fill="#fdfdf8" transform="skewX(-2)" transform-origin="1208.3 169.89999999999998"/><rect x="1199.5" y="167.0" width="17.6" height="5.8" rx="2" fill="#fff" opacity="0.28"/><path d="M1162 175l60 4v24h-60z" fill="#9f9783"/><path d="M1219.600 177l40-14v38l-40-5z" fill="#cdd0cb"/><path d="M1219.600 177l40-14v6l-40 12z" fill="#b5b3a8"/><rect x="1167.600" y="176" width="8.400" height="11.400" fill="#c9a23e"/><rect x="1178" y="176.600" width="7" height="12" fill="#d9d8cf"/><rect x="1188" y="183" width="14" height="10" fill="#7d776a"/><rect x="1184.600" y="184.400" width="5" height="4" fill="#f2f2ec"/><path d="M1222 195.800l38-2v3.800l-38 2.600z" fill="#c6a270"/><path d="M1241 201.400l20-1.400v4l-20 1.600z" fill="#c4a674"/><path d="M1196 204h66v18h-66z" fill="#6e6a63"/><path d="M1224 200.600h36v5h-36z" fill="#8b867c"/><rect x="1226" y="205" width="22" height="13" fill="#57534e"/><path d="M1139 174c-1.200-15 4.400-25 13.400-25 9.600 0 15 8.400 13.600 22-.8 8-1.200 14-.6 20h-25.400c.6-6-.4-11-1-17z" fill="#6b4130"/><ellipse cx="1151.800" cy="173" rx="8.200" ry="11.200" fill="#d9a18c"/><path d="M1142.800 169c1-9 5.600-13 10.400-12.800 5.400.2 8.800 4.200 9.200 11.400-2.800-4.400-6-6.400-9.800-6.600-4.200 0-7.200 3-9.800 8z" fill="#7a4a34"/><path d="M1147 178c2.600 2.400 7 2.400 9.600 0-1 3.200-8.600 3.200-9.600 0z" fill="#f5ebe6"/><path d="M1136 222v-28c3-3.400 9-5.600 13.400-6l6 9 4.600-8.400c8 2 15.600 9 18.600 20l2 14z" fill="#b5a3ad"/><path d="M1149.400 188l6 9 4.600-8.400" fill="none" stroke="#8c7884" stroke-width="1.100"/><path d="M1144 196l10 24M1164 194l8 22" stroke="#a08e98" stroke-width="0.800"/><ellipse cx="1176" cy="194.600" rx="4.600" ry="3.400" fill="#2b2928"/><rect x="1170" y="196.600" width="22" height="11" rx="2" fill="#46423f"/><ellipse cx="1193" cy="203" rx="6" ry="4.400" fill="#35322f"/><path d="M1206.400 194c-1-10 2-17.600 7.400-17.600 5.200 0 8 6.600 7 16-.4 4 .4 7 1.200 10h-17c.8-3 1.800-5 1.400-8.400z" fill="#8a5638"/><ellipse cx="1213.600" cy="185.600" rx="3.800" ry="5.200" fill="#d3a28a"/><path d="M1201 222c-1-11 .6-19.600 5.400-22.600h14c5 3 6.400 11 5.600 22.600z" fill="#7b5b64"/><path d="M1209.600 199.400l4 5.400 3.800-5.400z" fill="#cfa088"/><path d="M1203 212c5 3.400 15 3.400 21 0l1.400 10h-24z" fill="#5a444c"/><path d="M1226 206l8 16h-5l-6-12z" fill="#8f8f92"/></g></g><path d="M1074.400 204.400h123.600v15.800h-121.100a2.500 2.500 0 0 1-2.500-2.500z" fill="#1c1c1c" fill-opacity="0.6"/></svg>
<span class="t" style="left:1078.00px;top:206.90px;font-size:11px;line-height:11px;color:#f6f6f6;letter-spacing:-0.357px;">Los Alamos Public Library</span>
<!-- p_task.taskbar -->
<svg class="abs" style="left:0px;top:668px;overflow:hidden;" width="1280" height="19" viewBox="0 668 1280 19"><g fill="none" stroke="#f4f4f4" stroke-width="1.7"><path d="M35.400 690v-9.200a4.300 4.300 0 0 1 8.600 0V690"/></g><path d="M35.600 687.500L47 675.600" stroke="#d8123c" stroke-width="2.800"/><path d="M62.400 685.600l2.700-2.700 2.700 2.700" fill="none" stroke="#fff" stroke-width="1.3"/><g fill="none" stroke="#f2f2f2" stroke-width="1.4"><path d="M556.600 690v-9.600a2.600 2.600 0 0 1 2.600-2.600h9.400a2.600 2.600 0 0 1 2.600 2.600V690"/><path d="M553.600 690v-5.600a2.400 2.400 0 0 1 2.400-2.400h9.600a2.400 2.400 0 0 1 2.400 2.400V690"/></g><g fill="#f2f2f2"><circle cx="558" cy="686.400" r="0.800"/><circle cx="561" cy="686.400" r="0.800"/><circle cx="564" cy="686.400" r="0.800"/></g><path d="M587.200 685.800l2.700-2.700 2.700 2.700" fill="none" stroke="#fff" stroke-width="1.3"/><g fill="none" stroke="#f2f2f2" stroke-width="1.1" stroke-linejoin="round"><path d="M630.600 690v-9.400a1.200 1.200 0 0 1 2.400 0V690M633 690v-12a1.200 1.200 0 0 1 2.400 0V690M635.400 690v-12.600a1.200 1.200 0 0 1 2.400 0V690M637.800 690v-11.400a1.200 1.200 0 0 1 2.400 0V690M640.200 690v-5a1.300 1.300 0 0 1 2.600 0V690"/></g><rect x="703.400" y="677.600" width="19.200" height="14" rx="3" fill="none" stroke="#f2f2f2" stroke-width="1.4"/><text x="713" y="687.200" font-family="Liberation Sans" font-weight="bold" font-size="8.400" fill="#f2f2f2" text-anchor="middle">cc</text><path d="M738.800 685.800l2.700-2.700 2.700 2.700" fill="none" stroke="#fff" stroke-width="1.3"/><rect x="1232.400" y="673" width="11.600" height="15" fill="#8c0426"/><path d="M1235.600 673v14M1239 673v14M1242 673v14" stroke="#b0133a" stroke-width="0.800"/><g fill="none" stroke="#f4f4f4" stroke-width="1.4"><circle cx="1232" cy="680.400" r="2.600"/><path d="M1226 690v-1.600c0-3 2.600-4.600 6-4.600s6 1.600 6 4.600V690"/></g></svg>
<div class="abs" style="left:0px;top:687px;width:1280px;height:33px;background:#020203;"></div>
<div class="abs" style="left:288px;top:687.2px;width:40px;height:32.8px;background:#3b3b3c;"></div>
<div class="abs" style="left:250.6px;top:718px;width:33.6px;height:2px;background:#8fb7e4;"></div>
<div class="abs" style="left:288px;top:718px;width:40px;height:2px;background:#9cc3ee;"></div>
<svg class="abs" style="left:0px;top:687px;" width="1280" height="33" viewBox="0 687 1280 33"><g fill="#fff"><path d="M13 698.800l5.800-.8v5.400H13zM19.600 697.900l7.400-1v6.500h-7.400zM13 704.200h5.800v5.400l-5.800-.8zM19.600 704.200H27v6.500l-7.400-1z"/></g><circle cx="62" cy="701" r="4.400" fill="none" stroke="#fff" stroke-width="1.4"/><path d="M58.800 704.400L54 709.600" stroke="#fff" stroke-width="1.6"/><g fill="none" stroke="#fff" stroke-width="1.2"><rect x="95" y="699" width="7.600" height="8.800"/><path d="M93 697.400v1.600M93 708v1.600M104.600 697.400v3M104.600 706.600v3M106.600 699.400v1.600M106.600 704v4.600" /><path d="M95 703.400h7.600"/></g><path d="M134 697.400a1 1 0 0 1 1-1h5.400l1.600 1.800h9a1 1 0 0 1 1 1v10.600a1 1 0 0 1-1 1h-16a1 1 0 0 1-1-1z" fill="#f3c74f"/><rect x="134" y="699.600" width="18" height="11.200" rx="0.800" fill="#fbe08c"/><rect x="137.600" y="703.600" width="10.800" height="7.200" fill="#3f8ede"/><rect x="139.800" y="706.200" width="6.400" height="4.600" fill="#fbe08c"/><defs><linearGradient id="edg" x1="0" y1="0" x2="1" y2="1"><stop offset="0" stop-color="#35c1f1"/><stop offset="0.550" stop-color="#1275c8"/><stop offset="1" stop-color="#0d4f9e"/></linearGradient><linearGradient id="edg2" x1="0" y1="0" x2="1" y2="0"><stop offset="0" stop-color="#2fb76a"/><stop offset="1" stop-color="#66dd70"/></linearGradient></defs><circle cx="184.200" cy="703.600" r="9.800" fill="url(#edg)"/><path d="M175 700c2-5.600 8-7.400 12.600-5.600 3.600 1.400 6.400 4.600 6.400 8.800h-9.600c.2-2.600-2.600-4.200-5-3.200-2 .8-3.400 2.400-4.400 0z" fill="url(#edg2)"/><path d="M181 700.600c2.600-.8 4.800 1 3.600 3.400-.8 1.600-.4 3.800 2.400 4.800-3 1.400-7.200-.4-8-3.800-.4-2 .4-3.600 2-4.400z" fill="#020203" opacity="0.850"/><path d="M225 694.200l4.400 11.600h-8.800z" fill="#f48b00"/><path d="M223.400 698.600h3.200l1.200 3.200h-5.600z" fill="#fff"/><path d="M218 706.600c0-1 .8-1.400 1.600-1.400h10.800c.8 0 1.600.4 1.600 1.400l.6 4.600c0 .8-.6 1.200-1.200 1.200h-12.800c-.6 0-1.200-.4-1.200-1.200z" fill="#f07c00"/><circle cx="266.800" cy="703.600" r="9.800" fill="#e8453c"/><path d="M266.800 703.600L258.400 698.600A9.800 9.800 0 0 0 262 712.100Z" fill="#2da94f"/><path d="M266.800 703.600L262 712.100A9.800 9.800 0 0 0 266.800 713.400 9.800 9.800 0 0 0 275.400 708.400L266.800 703.600Z" fill="#2da94f"/><path d="M266.800 703.600H276.600A9.800 9.800 0 0 1 270.600 712.600Z" fill="#fdd33c"/><path d="M266.800 703.600L271.600 712.300A9.800 9.800 0 0 0 276.600 703.600Z" fill="#fdd33c"/><circle cx="266.800" cy="703.600" r="4.500" fill="#fff"/><circle cx="266.800" cy="703.600" r="3.500" fill="#4a8af4"/><circle cx="307.600" cy="703" r="9.800" fill="#0b5cff"/><text x="307.600" y="705" font-family="Liberation Sans" font-weight="bold" font-size="5.600" fill="#fff" text-anchor="middle">zoom</text><circle cx="1030.200" cy="703.300" r="6" fill="#2b6cf2"/><text x="1030.200" y="705.300" font-family="Liberation Sans" font-weight="bold" font-size="5.600" fill="#fff" text-anchor="middle">zm</text><rect x="1043.400" y="696.800" width="13.400" height="13" fill="#8c9096"/><rect x="1044.600" y="698" width="11" height="8" fill="#c9ced4"/><circle cx="1050.200" cy="703.600" r="3" fill="#2d6fd0"/><rect x="1045" y="706" width="3" height="3.800" fill="#5a4a46"/><rect x="1052.600" y="706" width="3" height="3.800" fill="#5a4a46"/><path d="M1070 696.800c1.800 1.200 3.800 1.800 5.600 1.800 0 5.200-1.400 8.600-5.600 10.800-4.200-2.200-5.600-5.600-5.600-10.800 1.800 0 3.800-.6 5.600-1.800z" fill="#f2f2f2"/><path d="M1070 696.800v12.600M1064.400 702.600h11.200" stroke="#6a6a6a" stroke-width="0.800"/><circle cx="1073.800" cy="707.400" r="2.800" fill="#1faa4b"/><path d="M1072.400 707.400l1 1 1.800-2" stroke="#fff" stroke-width="0.800" fill="none"/><rect x="1085.600" y="696.200" width="8.800" height="14.400" rx="4.400" fill="#1672d8"/><path d="M1087.800 700.600l4.400 5-2.200 2.200v-8.800l2.200 2.200-4.400 5" fill="none" stroke="#fff" stroke-width="0.900"/><circle cx="1110" cy="703.300" r="6" fill="#7fb9c4"/><path d="M1105 701c2-3.400 6-4 8.600-2-1 2.400-3.400 2-4.600 3.600-1 1.400.4 3.400-1.400 4.800-1.800-1-3.200-3.400-2.600-6.400z" fill="#e8f2f0"/><circle cx="1113" cy="706" r="2.600" fill="#2f6f9a"/><g fill="#e8e8e8"><rect x="1126" y="700.600" width="10.600" height="6.400" rx="0.800"/><rect x="1124" y="698.600" width="5" height="2.400"/><path d="M1123.600 702.400h2.400v2.800h-2.400z"/></g><rect x="1127.600" y="702" width="7.400" height="3.400" fill="#3a3a3a"/><g fill="none" stroke="#f2f2f2" stroke-width="1.100"><rect x="1146" y="698.600" width="11" height="7.600"/><path d="M1151.500 706.200v2.400M1148.600 708.800h5.800M1143.600 701v3"/></g><g fill="none" stroke="#f2f2f2" stroke-width="1"><path d="M1164 701.600h2.200l3-2.800v9.600l-3-2.800H1164z"/><path d="M1171.200 701.400c1 1.200 1 3.400 0 4.600M1173.200 699.800c1.800 2 1.800 5.800 0 7.800M1175.200 698.400c2.600 3 2.600 7.600 0 10.600"/></g><path d="M1246.600 697.600h13v9.600h-4.400l-2.600 2.600v-2.600h-6z" fill="#f4f4f4"/><path d="M1248.800 700.400h8.600M1248.800 702.600h8.600M1248.800 704.800h5" stroke="#1a1a1a" stroke-width="0.800"/><circle cx="1258.600" cy="707.800" r="2.600" fill="#1a1a1a" stroke="#e8e8e8" stroke-width="0.800"/><path d="M1276.500 688v32" stroke="#7a7a7a" stroke-width="0.800"/></svg>
<span class="t" style="left:1191.40px;top:691.00px;font-size:10px;line-height:10px;color:#fff;letter-spacing:-0.607px;">5:32 PM</span>
<span class="t" style="left:1188.60px;top:706.40px;font-size:10px;line-height:10px;color:#fff;letter-spacing:0.068px;">9/8/2025</span>
</div></div>
</body>
</html>
